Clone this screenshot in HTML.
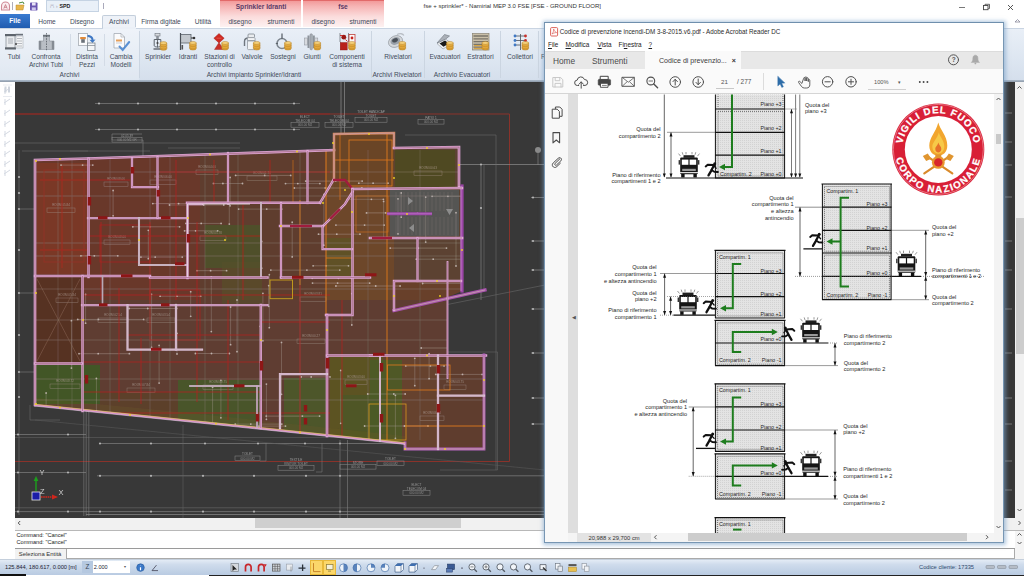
<!DOCTYPE html>
<html><head><meta charset="utf-8"><title>fse + sprinkler - Namirial MEP 3.0 FSE</title>
<style>
html,body{margin:0;padding:0;}
body{width:1024px;height:576px;overflow:hidden;position:relative;background:#fff;font-family:"Liberation Sans",sans-serif;color:#3a4450;}
.a{position:absolute;}
.t{position:absolute;white-space:nowrap;font-size:6.6px;line-height:8px;color:#414b5a;transform:translateX(-50%);text-align:center;}
.l{position:absolute;white-space:nowrap;font-size:6.6px;line-height:8px;color:#414b5a;}
.sep{position:absolute;top:31px;width:1px;height:47px;background:#cbd5e1;}
svg{position:absolute;overflow:visible;}
</style></head><body>
<!-- ===== MAIN APP TITLE BAR ===== -->
<div class="a" style="left:0;top:0;width:1024px;height:28px;background:#fff;"></div>
<!-- contextual tab groups -->
<div class="a" style="left:220px;top:0;width:81px;height:27px;background:linear-gradient(#f29a9a 0,#f6b4b4 20%,#fbdcdc 60%,#fdf1f1 100%);border-top:1px solid #e26a6a;box-sizing:border-box;"></div>
<div class="a" style="left:303px;top:0;width:81px;height:27px;background:linear-gradient(#f29a9a 0,#f6b4b4 20%,#fbdcdc 60%,#fdf1f1 100%);border-top:1px solid #e26a6a;box-sizing:border-box;"></div>
<div class="t" style="left:261px;top:3px;font-weight:bold;color:#5a3a66;">Sprinkler Idranti</div>
<div class="t" style="left:343px;top:3px;font-weight:bold;color:#5a3a66;">fse</div>
<div class="t" style="left:240px;top:18px;">disegno</div>
<div class="t" style="left:281px;top:18px;">strumenti</div>
<div class="t" style="left:323px;top:18px;">disegno</div>
<div class="t" style="left:363px;top:18px;">strumenti</div>
<!-- quick access -->
<div class="a" style="left:46px;top:0;width:53px;height:12px;background:#e9f0f8;border:1px solid #c5d3e3;box-sizing:border-box;"></div>
<div class="l" style="left:59.4px;top:2px;color:#222;font-size:5.3px;font-weight:bold;">SPD</div>
<div class="l" style="left:50px;top:2px;color:#aab;font-size:6px;">⩃ ›</div>
<svg style="left:0;top:0" width="46" height="14" viewBox="0 0 46 14">
 <path d="M1.500 10V6a4 4 0 0 1 8 0v4z" fill="#fbeef0" stroke="#cf8a96" stroke-width="1.100"/><path d="M3.800 8.600l1.700-4l1.700 4M4.500 7.300h2" fill="none" stroke="#b8606c" stroke-width=".7"/>
 <rect x="12" y="2" width=".8" height="8" fill="#99a"/>
 <path d="M16 5 h8 l-1 5 h-7 z" fill="#e8b64c" stroke="#b98a2a" stroke-width=".5"/><path d="M19 3 l4 -1 l1 2" fill="none" stroke="#4a8a3a" stroke-width="1"/>
 <rect x="30" y="2.5" width="7.5" height="8" rx=".8" fill="#6a56b0"/><rect x="32" y="2.5" width="3.6" height="3" fill="#e8e4f6"/><rect x="31.8" y="7.4" width="4" height="3" fill="#cfc8ee"/>
</svg>
<div class="a" style="left:103px;top:3px;width:1px;height:6px;background:#aab;"></div>
<!-- title -->
<div class="l" style="left:423.5px;top:2px;color:#333;font-size:6.05px;">fse + sprinkler* - Namirial MEP 3.0 FSE [FSE - GROUND FLOOR]</div>
<svg style="left:950px;top:0" width="74" height="28" viewBox="950 0 74 28">
 <path d="M959 7.5 h6" stroke="#555" stroke-width=".8"/>
 <rect x="983.5" y="5.5" width="4.5" height="4.2" fill="#fff" stroke="#444" stroke-width=".9"/><path d="M985 5.3 v-1 h4.5 v4.2 h-1.2" fill="none" stroke="#444" stroke-width=".8"/>
 <path d="M1008 5 l5 5 m0 -5 l-5 5" stroke="#444" stroke-width=".9"/>
 <path d="M1015 22 l2.5 -2.5 l2.5 2.5 z" fill="none" stroke="#889" stroke-width=".8"/>
</svg>
<!-- tabs -->
<div class="a" style="left:0;top:14px;width:30px;height:14px;background:linear-gradient(#3a7bd0,#1f5cb0);"></div>
<div class="t" style="left:15px;top:17px;color:#fff;font-weight:bold;">File</div>
<div class="t" style="left:47px;top:18px;">Home</div>
<div class="t" style="left:82px;top:18px;">Disegno</div>
<div class="a" style="left:102px;top:15px;width:34px;height:14px;background:#eef2f8;border:1px solid #c3cedb;border-bottom:none;box-sizing:border-box;border-radius:2px 2px 0 0;"></div>
<div class="t" style="left:119px;top:18px;">Archivi</div>
<div class="t" style="left:161px;top:18px;">Firma digitale</div>
<div class="t" style="left:203px;top:18px;">Utilità</div>
<!-- ribbon body -->
<div class="a" style="left:0;top:28px;width:1024px;height:52px;background:linear-gradient(#e9eff7,#dde6f1 60%,#d5dfec);border-top:1px solid #c9d4e2;box-sizing:border-box;"></div>
<div class="a" style="left:102.5px;top:27px;width:33px;height:2px;background:#ebf0f7;"></div>
<div class="a" style="left:0;top:29px;width:139px;height:51px;background:rgba(255,255,255,.25);"></div>
<div class="a" style="left:0;top:80px;width:1024px;height:2px;background:linear-gradient(#aebccd,#8d99a8);"></div>
<div class="sep" style="left:69.5px;top:34px;height:32px;background:#d3dbe6;"></div>
<div class="sep" style="left:103.5px;top:34px;height:32px;background:#d3dbe6;"></div>
<div class="sep" style="left:139px;"></div>
<div class="sep" style="left:371px;"></div>
<div class="sep" style="left:424px;"></div>
<div class="sep" style="left:500px;"></div>
<div class="sep" style="left:538px;"></div>
<!-- labels -->
<div class="t" style="left:14px;top:53px;">Tubi</div>
<div class="t" style="left:46px;top:53px;">Confronta<br>Archivi Tubi</div>
<div class="t" style="left:87px;top:53px;">Distinta<br>Pezzi</div>
<div class="t" style="left:121px;top:53px;">Cambia<br>Modelli</div>
<div class="t" style="left:69.5px;top:70.7px;">Archivi</div>
<div class="t" style="left:158px;top:53px;">Sprinkler</div>
<div class="t" style="left:188px;top:53px;">Idranti</div>
<div class="t" style="left:219.5px;top:53px;">Stazioni di<br>controllo</div>
<div class="t" style="left:252px;top:53px;">Valvole</div>
<div class="t" style="left:283px;top:53px;">Sostegni</div>
<div class="t" style="left:312px;top:53px;">Giunti</div>
<div class="t" style="left:347px;top:53px;">Componenti<br>di sistema</div>
<div class="t" style="left:254px;top:70.7px;">Archivi impianto Sprinkler/Idranti</div>
<div class="t" style="left:398px;top:53px;">Rivelatori</div>
<div class="t" style="left:397px;top:70.7px;">Archivi Rivelatori</div>
<div class="t" style="left:445px;top:53px;">Evacuatori</div>
<div class="t" style="left:480.5px;top:53px;">Estrattori</div>
<div class="t" style="left:462px;top:70.7px;">Archivio Evacuatori</div>
<div class="t" style="left:520px;top:53px;">Collettori</div>
<div class="l" style="left:541px;top:53px;">R</div>
<!-- ===== RIBBON ICONS ===== -->
<svg style="left:0;top:0" width="545" height="82" viewBox="0 0 545 82">
<g transform="translate(5 33)"><rect x="1" y="1.500" width="9" height="14" fill="#e9ecef" stroke="#8d949c" stroke-width=".8"/><rect x="0" y="1" width="11" height="2.200" fill="#5d646c"/><rect x="0" y="14.300" width="11" height="2.200" fill="#5d646c"/><rect x="3" y="5" width="5" height="6" fill="#c9cdd2"/><rect x="11" y="3" width="7" height="12" fill="#f4f5f7" stroke="#a8aeb6" stroke-width=".6"/><path d="M12 5.500h5M12 8h5M12 10.500h5M12 13h5" stroke="#8d949c" stroke-width=".6"/><rect x="10.500" y="0.800" width="7.500" height="1.600" fill="#6b727a"/><circle cx="11" cy="11" r="1" fill="#444"/></g>
<g transform="translate(38 33)"><path d="M1 8h4.500V3h6v5H16v8.500H1z" fill="#b9bec5" stroke="#8a9098" stroke-width=".6"/><rect x="1" y="8" width="2.200" height="8.500" fill="#858b93"/><rect x="13.800" y="8" width="2.200" height="8.500" fill="#858b93"/><rect x="5" y="1.800" width="7" height="1.800" fill="#6b727a"/><path d="M8.500 0v18" stroke="#4a5058" stroke-width=".7" stroke-dasharray="1.600 1"/></g>
<g transform="translate(78 33)"><rect x=".5" y=".5" width="9" height="12" fill="#fbfbfc" stroke="#9aa1aa" stroke-width=".7"/><rect x="2.200" y="4" width="5.600" height="2.200" fill="#e08a3a"/><rect x="3.200" y="6.200" width="3.600" height="3.600" fill="#6b727a"/><path d="M9.500 2c3.500 0 6 1.800 6 4.800l2-.2-3 3.400-3-3.200 2 .2C13.500 5 11.500 4 9.500 4z" fill="#3f78c4"/><rect x="9.500" y="10" width="7.500" height="7.500" fill="#f4f6f8" stroke="#7d858e" stroke-width=".8"/><path d="M9.500 12.500h7.500" stroke="#7d858e" stroke-width=".7"/></g>
<g transform="translate(113 33)"><path d="M1 .5h7l3.500 3.500V15H1z" fill="#fbfbfc" stroke="#9aa1aa" stroke-width=".7"/><path d="M8 .5V4h3.500" fill="none" stroke="#9aa1aa" stroke-width=".6"/><rect x="3" y="6.500" width="6" height="2" fill="#e6a05a"/><rect x="3" y="9.500" width="6" height="1" fill="#c9ced4"/><path d="M6.500 13.500l3.200 3.500 6.500-8" fill="none" stroke="#4a86cf" stroke-width="2" stroke-linecap="round" opacity=".9"/></g>
<g transform="translate(153 33)"><rect x="2" y=".5" width="5" height="2.500" fill="#d7dadf" stroke="#6f767e" stroke-width=".6"/><rect x="3.200" y="3" width="2.600" height="3.500" fill="#8a9098"/><path d="M1.200 6.500h6.600v6c0 2-6.600 2-6.600 0z" fill="none" stroke="#5d646c" stroke-width="1"/><path d="M4.500 6.500v8" stroke="#5d646c" stroke-width=".9"/><path d="M.5 16h8" stroke="#5d646c" stroke-width="1.400"/><circle cx="4.500" cy="10" r="1.100" fill="#444"/><path d="M7.2 10.1v5.6a3.3 1.5 0 0 0 6.6 0v-5.6z" fill="#e3a83a" stroke="#b07a1e" stroke-width=".5"/><path d="M7.2 12.3a3.3 1.5 0 0 0 6.6 0M7.2 14.5a3.3 1.5 0 0 0 6.6 0" fill="none" stroke="#b98428" stroke-width=".45"/><ellipse cx="10.5" cy="10.1" rx="3.3" ry="1.5" fill="#f4cf7a" stroke="#b07a1e" stroke-width=".45"/></g>
<g transform="translate(179 33)"><rect x="1.500" y="1.500" width="10.500" height="8.500" fill="#c3c8ce" stroke="#5d646c" stroke-width=".8"/><path d="M1.500 0v17" stroke="#4a5058" stroke-width="1.200"/><path d="M12 5h3.500" stroke="#333" stroke-width="1"/><circle cx="15" cy="5" r="1.300" fill="#333"/><rect x="2.500" y="12" width="1.600" height="4.500" fill="#555"/><path d="M10.6 9.9v5.6a3.3 1.5 0 0 0 6.6 0v-5.6z" fill="#e3a83a" stroke="#b07a1e" stroke-width=".5"/><path d="M10.6 12.100000000000001a3.3 1.5 0 0 0 6.6 0M10.6 14.3a3.3 1.5 0 0 0 6.6 0" fill="none" stroke="#b98428" stroke-width=".45"/><ellipse cx="13.899999999999999" cy="9.9" rx="3.3" ry="1.5" fill="#f4cf7a" stroke="#b07a1e" stroke-width=".45"/></g>
<g transform="translate(213 33)"><path d="M6 .5l5.200 4.700L6 9.900.8 5.200z" fill="#cf2a22" stroke="#9a1a16" stroke-width=".4"/><path d="M6 9.500l4.500 7h-9z" fill="#c8302a" stroke="#9a1a16" stroke-width=".4"/><path d="M3.500 5.200h5" stroke="#e86a60" stroke-width=".7"/><path d="M8.8 9.9v5.6a3.3 1.5 0 0 0 6.6 0v-5.6z" fill="#e3a83a" stroke="#b07a1e" stroke-width=".5"/><path d="M8.8 12.100000000000001a3.3 1.5 0 0 0 6.6 0M8.8 14.3a3.3 1.5 0 0 0 6.6 0" fill="none" stroke="#b98428" stroke-width=".45"/><ellipse cx="12.100000000000001" cy="9.9" rx="3.3" ry="1.5" fill="#f4cf7a" stroke="#b07a1e" stroke-width=".45"/></g>
<g transform="translate(243 33)"><path d="M1.500 13V8.500c0-2.500 1.500-3.500 4-3.500" fill="none" stroke="#6f767e" stroke-width="1.400"/><rect x="5" y="1" width="6.500" height="3.600" rx="1" fill="#e9ecef" stroke="#6f767e" stroke-width=".7"/><rect x="4.500" y="4.600" width="7.600" height="12" rx="1" fill="#f1f3f5" stroke="#8a9098" stroke-width=".7"/><rect x="4.500" y="7" width="7.600" height="1.400" fill="#9aa1aa"/><path d="M10.4 9.9v5.6a3.3 1.5 0 0 0 6.6 0v-5.6z" fill="#e3a83a" stroke="#b07a1e" stroke-width=".5"/><path d="M10.4 12.100000000000001a3.3 1.5 0 0 0 6.6 0M10.4 14.3a3.3 1.5 0 0 0 6.6 0" fill="none" stroke="#b98428" stroke-width=".45"/><ellipse cx="13.7" cy="9.9" rx="3.3" ry="1.5" fill="#f4cf7a" stroke="#b07a1e" stroke-width=".45"/></g>
<g transform="translate(275 33)"><circle cx="7" cy="10.500" r="5" fill="none" stroke="#7d858e" stroke-width="1.500"/><path d="M7 .5v5.500" stroke="#5d646c" stroke-width="1.300"/><path d="M.8 10.500h2.200" stroke="#5d646c" stroke-width="1.200"/><path d="M9.6 9.9v5.6a3.3 1.5 0 0 0 6.6 0v-5.6z" fill="#e3a83a" stroke="#b07a1e" stroke-width=".5"/><path d="M9.6 12.100000000000001a3.3 1.5 0 0 0 6.6 0M9.6 14.3a3.3 1.5 0 0 0 6.6 0" fill="none" stroke="#b98428" stroke-width=".45"/><ellipse cx="12.899999999999999" cy="9.9" rx="3.3" ry="1.5" fill="#f4cf7a" stroke="#b07a1e" stroke-width=".45"/></g>
<g transform="translate(304 33)"><rect x=".5" y="5" width="3" height="7" fill="#d7dadf" stroke="#8a9098" stroke-width=".5"/><rect x="3.500" y="2.500" width="2" height="12.500" fill="#8d949c"/><rect x="6" y=".8" width="2.400" height="16" rx="1" fill="#a8aeb6" stroke="#6f767e" stroke-width=".4"/><rect x="8.800" y="2.500" width="2" height="12.500" fill="#8d949c"/><rect x="10.800" y="5" width="3" height="7" fill="#d7dadf" stroke="#8a9098" stroke-width=".5"/><path d="M10 9.9v5.6a3.3 1.5 0 0 0 6.6 0v-5.6z" fill="#e3a83a" stroke="#b07a1e" stroke-width=".5"/><path d="M10 12.100000000000001a3.3 1.5 0 0 0 6.6 0M10 14.3a3.3 1.5 0 0 0 6.6 0" fill="none" stroke="#b98428" stroke-width=".45"/><ellipse cx="13.3" cy="9.9" rx="3.3" ry="1.5" fill="#f4cf7a" stroke="#b07a1e" stroke-width=".45"/></g>
<g transform="translate(339 33)"><path d="M1 0v9M9.500 0v9" stroke="#6f767e" stroke-width=".8"/><rect x="10" y="1.500" width="6" height="8" fill="#fafafa" stroke="#c0403a" stroke-width=".8"/><circle cx="13" cy="5" r="1.400" fill="#c8221c"/><circle cx="4.800" cy="4.200" r="2.400" fill="#9a1a16"/><path d="M1 2.500h3M6.500 6.500l2 2" stroke="#c8221c" stroke-width=".9"/><rect x="1.200" y="9.500" width="7" height="7.500" fill="#b8221c" stroke="#8a1612" stroke-width=".4"/><path d="M9.6 9.9v5.6a3.3 1.5 0 0 0 6.6 0v-5.6z" fill="#e3a83a" stroke="#b07a1e" stroke-width=".5"/><path d="M9.6 12.100000000000001a3.3 1.5 0 0 0 6.6 0M9.6 14.3a3.3 1.5 0 0 0 6.6 0" fill="none" stroke="#b98428" stroke-width=".45"/><ellipse cx="12.899999999999999" cy="9.9" rx="3.3" ry="1.5" fill="#f4cf7a" stroke="#b07a1e" stroke-width=".45"/></g>
<g transform="translate(388 33)"><ellipse cx="7.500" cy="8.500" rx="7.300" ry="5.600" transform="rotate(-24 7.500 8.500)" fill="#d4d7db" stroke="#8a9098" stroke-width=".6"/><ellipse cx="7.300" cy="8" rx="5" ry="3.600" transform="rotate(-24 7.300 8)" fill="#9aa1aa"/><ellipse cx="7" cy="7.300" rx="3" ry="2" transform="rotate(-24 7 7.300)" fill="#4a5058"/><path d="M9 1.500c3-1.500 6-.8 6.800 1" fill="none" stroke="#b9bec5" stroke-width="1.300"/><path d="M11 9.9v5.6a3.3 1.5 0 0 0 6.6 0v-5.6z" fill="#e3a83a" stroke="#b07a1e" stroke-width=".5"/><path d="M11 12.100000000000001a3.3 1.5 0 0 0 6.6 0M11 14.3a3.3 1.5 0 0 0 6.6 0" fill="none" stroke="#b98428" stroke-width=".45"/><ellipse cx="14.3" cy="9.9" rx="3.3" ry="1.5" fill="#f4cf7a" stroke="#b07a1e" stroke-width=".45"/></g>
<g transform="translate(436 33)"><path d="M1 10.500L9.500 6l6 4.500L7 16z" fill="#f1f3f5" stroke="#8a9098" stroke-width=".6"/><path d="M3.500 10.500L9 7.600l4 3-5.500 3.200z" fill="#1a1a1a"/><path d="M1 10L8.500 1.500l5 1.500-4 3.200z" fill="#aab0b8" stroke="#6f767e" stroke-width=".6"/><path d="M10.6 9.9v5.6a3.3 1.5 0 0 0 6.6 0v-5.6z" fill="#e3a83a" stroke="#b07a1e" stroke-width=".5"/><path d="M10.6 12.100000000000001a3.3 1.5 0 0 0 6.6 0M10.6 14.3a3.3 1.5 0 0 0 6.6 0" fill="none" stroke="#b98428" stroke-width=".45"/><ellipse cx="13.899999999999999" cy="9.9" rx="3.3" ry="1.5" fill="#f4cf7a" stroke="#b07a1e" stroke-width=".45"/></g>
<g transform="translate(472 33)"><rect x=".5" y=".5" width="16.500" height="16.500" fill="#c9bfa8" stroke="#8a8474" stroke-width=".7"/><path d="M1.500 3h14.500M1.500 5.800h14.500M1.500 8.600h14.500M1.500 11.400h14.500M1.500 14.200h14.500" stroke="#7a756a" stroke-width="1.300"/><path d="M2 12.600h8M2 15.400h8" stroke="#d9a43a" stroke-width="1"/><path d="M10 9.9v5.6a3.3 1.5 0 0 0 6.6 0v-5.6z" fill="#e3a83a" stroke="#b07a1e" stroke-width=".5"/><path d="M10 12.100000000000001a3.3 1.5 0 0 0 6.6 0M10 14.3a3.3 1.5 0 0 0 6.6 0" fill="none" stroke="#b98428" stroke-width=".45"/><ellipse cx="13.3" cy="9.9" rx="3.3" ry="1.5" fill="#f4cf7a" stroke="#b07a1e" stroke-width=".45"/></g>
<g transform="translate(512 33)"><path d="M8.500 1v16M3 3h10.500M3 7.500h10.500M3 12h5.500" stroke="#4a5058" stroke-width=".8"/><circle cx="3" cy="3" r="1.400" fill="#3f78c4"/><circle cx="3" cy="7.500" r="1.400" fill="#3f78c4"/><circle cx="3" cy="12" r="1.400" fill="#3f78c4"/><circle cx="13.500" cy="3" r="1.400" fill="#c8302a"/><circle cx="13.500" cy="7.500" r="1.400" fill="#c8302a"/><path d="M10 9.9v5.6a3.3 1.5 0 0 0 6.6 0v-5.6z" fill="#e3a83a" stroke="#b07a1e" stroke-width=".5"/><path d="M10 12.100000000000001a3.3 1.5 0 0 0 6.6 0M10 14.3a3.3 1.5 0 0 0 6.6 0" fill="none" stroke="#b98428" stroke-width=".45"/><ellipse cx="13.3" cy="9.9" rx="3.3" ry="1.5" fill="#f4cf7a" stroke="#b07a1e" stroke-width=".45"/></g>
</svg>
<!-- ===== CAD AREA FRAME ===== -->
<div class="a" style="left:0;top:82px;width:15px;height:478px;background:#fff;"></div>
<div class="a" id="cad" style="left:15px;top:82px;width:1000px;height:436px;background:#383838;"></div>
<div class="a" style="left:1015px;top:82px;width:9px;height:436px;background:#f1f1f1;"></div>
<div class="a" style="left:1016px;top:218px;width:8px;height:136px;background:#cdcdcd;"></div>
<div class="a" style="left:15px;top:518px;width:1009px;height:12px;background:#f1f1f1;"></div>
<div class="a" style="left:255px;top:518px;width:206px;height:10px;background:#cfcfcf;"></div>
<!-- command area -->
<div class="a" style="left:15px;top:530px;width:1009px;height:30px;background:#fff;border-top:1px solid #b8b8b8;box-sizing:border-box;"></div>
<div class="l" style="left:16.5px;top:531.5px;color:#222;font-size:5.6px;line-height:7.6px;">Command: "Cancel"<br>Command: "Cancel"</div>
<div class="a" style="left:15px;top:548px;width:1000px;height:1px;background:#9a9a9a;"></div>
<div class="a" style="left:15px;top:549px;width:51px;height:11px;background:#f2f2f2;"></div>
<div class="a" style="left:66px;top:549px;width:949px;height:10px;background:#fff;border:1px solid #aaa;border-top:none;box-sizing:border-box;"></div>
<div class="l" style="left:18.8px;top:550px;color:#333;font-size:5.9px;">Seleziona Entità</div>
<div class="a" style="left:1015px;top:531px;width:9px;height:29px;background:#f4f4f4;"></div>
<!-- status bar -->
<div class="a" style="left:0;top:559px;width:1024px;height:16px;background:linear-gradient(#e3ebf5 0,#cfdcec 30%,#b9cbe2 100%);border-top:1px solid #c4cfdc;box-sizing:border-box;"></div>
<div class="a" style="left:0;top:574px;width:26px;height:2px;background:#111;"></div>
<div class="a" style="left:209px;top:574.5px;width:815px;height:1.5px;background:#222;"></div>
<div class="l" style="left:5px;top:563px;color:#223;font-size:5.72px;">125.844, 180.617, 0.000 [m]</div>
<div class="a" style="left:82px;top:561px;width:11px;height:12px;background:#b5c8e0;"></div>
<div class="l" style="left:85.5px;top:563px;color:#345;font-size:6.3px;">Z</div>
<div class="a" style="left:93px;top:561px;width:37px;height:12px;background:#fff;"></div>
<div class="l" style="left:93.8px;top:563px;color:#223;font-size:5.5px;">2.000</div>
<div class="l" style="left:124px;top:563px;color:#555;font-size:4px;">▾</div>
<div class="l" style="left:919px;top:563px;color:#2d4a6e;font-size:5.72px;">Codice cliente: 17335</div>
<svg style="left:0;top:0" width="1024" height="576" viewBox="0 0 1024 576" fill="none" stroke="#555" stroke-width="1">
<path d="M1017.500 88.500l2-2l2 2M1017.500 509l2 2l2-2M1017.500 535.500l2-2l2 2M1017.500 542l2 2l2-2M20.200 521l-2 2l2 2M1018.500 521l2 2l-2 2"/>
</svg>
<!-- ===== STATUS BAR ICONS + LEFT TOOLBAR ===== -->
<div class="a" style="left:310px;top:560px;width:13px;height:14.500px;background:#fbd76a;border:1px solid #e8b93a;box-sizing:border-box;"></div>
<div class="a" style="left:323px;top:560px;width:13px;height:14.500px;background:#fbd76a;border:1px solid #e8b93a;box-sizing:border-box;"></div>
<svg style="left:0;top:0" width="1024" height="576" viewBox="0 0 1024 576">
<rect x="231" y="563.6" width="7.500" height="8" fill="#d5d9de" stroke="#7d858e" stroke-width=".7"/><path d="M232.500 565.1l4.500 4.500h-2.500l-2 1.500z" fill="#222"/>
<path d="M245.5 571.6v-4.500a2.800 2.800 0 0 1 5.600 0v4.500" fill="none" stroke="#c8262a" stroke-width="1.700"/>
<path d="M258.5 571.6v-4.500a2.800 2.800 0 0 1 5.600 0v4.500" fill="none" stroke="#c8262a" stroke-width="1.700"/>
<path d="M264 564.1l2.800 .4l-1.600 2.200z" fill="#c8262a"/>
<rect x="272.500" y="564.1" width="7.500" height="7" fill="#cfd3d8" stroke="#555" stroke-width=".7"/><path d="M272.500 566.4h7.500M272.500 568.8000000000001h7.500M275 564.1v7M277.500 564.1v7" stroke="#555" stroke-width=".55"/>
<rect x="286.500" y="564.1" width="6" height="6" fill="#e8ebef" stroke="#9aa1aa" stroke-width=".6"/><path d="M291 566.6v5" stroke="#8a9098" stroke-width=".8"/>
<path d="M298.500 568.1h7M302.600 564.6v6.500" stroke="#2a3038" stroke-width="1.300"/>
<path d="M313.500 563.1v8.500h7" fill="none" stroke="#c8862a" stroke-width="1"/>
<rect x="326.500" y="564.6" width="6.500" height="5" fill="#f4f0d8" stroke="#8a7a3a" stroke-width=".7"/><path d="M328 571.1h3" stroke="#8a7a3a" stroke-width=".8"/>
<circle cx="343.5" cy="567.8000000000001" r="4" fill="#eef3f9" stroke="#5a82b4" stroke-width=".8"/>
<path d="M343.5 563.8000000000001a4 4 0 0 1 0 8z" fill="#3f6fb0" opacity=".85"/>
<circle cx="357" cy="567.8000000000001" r="4" fill="#eef3f9" stroke="#5a82b4" stroke-width=".8"/>
<path d="M357 563.8000000000001a4 4 0 0 0 0 8z" fill="#3f6fb0" opacity=".85"/>
<circle cx="371" cy="567.8000000000001" r="4" fill="#eef3f9" stroke="#5a82b4" stroke-width=".8"/>
<path d="M371 563.8000000000001a4 4 0 0 1 4 4h-4z" fill="#3f6fb0" opacity=".85"/>
<circle cx="385" cy="567.8000000000001" r="4" fill="#eef3f9" stroke="#5a82b4" stroke-width=".8"/>
<path d="M385 563.8000000000001a4 4 0 0 0 -4 4h4z" fill="#3f6fb0" opacity=".85"/>
<path d="M395 566.1l2.500-2.500h6v6l-2.500 2.500h-6z" fill="#f2f5f9" stroke="#44618a" stroke-width=".7"/><path d="M395 566.1l2.500-2.500h6l-2.500 2.500z" fill="#3f6fb0"/><path d="M401 566.1v6" stroke="#44618a" stroke-width=".6"/>
<path d="M409 566.1l2.500-2.500h6v6l-2.500 2.500h-6z" fill="#f2f5f9" stroke="#44618a" stroke-width=".7"/><path d="M409 566.1l2.500-2.500h6l-2.500 2.500z" fill="#3f6fb0"/><path d="M415 566.1v6" stroke="#44618a" stroke-width=".6"/>
<circle cx="424" cy="568.1" r=".7" fill="#556"/>
<path d="M431.500 569.6l3-4h4l-3 4z" fill="#f4f6f9" stroke="#8a9098" stroke-width=".7"/>
<rect x="447.500" y="564.1" width="7" height="5.500" fill="#3a5a94" stroke="#263c66" stroke-width=".6"/><rect x="446.500" y="568.6" width="6" height="3.500" fill="#5a7ab4" stroke="#263c66" stroke-width=".5"/>
<path d="M461 568.1h2" stroke="#445" stroke-width=".8"/>
<circle cx="472" cy="566.9" r="3.100" fill="#f2f5f9" stroke="#555c66" stroke-width=".9"/><path d="M474.3 569.2l2.600 2.600" stroke="#555c66" stroke-width="1.300"/>
<circle cx="486" cy="566.9" r="3.100" fill="#f2f5f9" stroke="#555c66" stroke-width=".9"/><path d="M488.3 569.2l2.600 2.600" stroke="#555c66" stroke-width="1.300"/>
<circle cx="500" cy="566.9" r="3.100" fill="#f2f5f9" stroke="#555c66" stroke-width=".9"/><path d="M502.3 569.2l2.600 2.600" stroke="#555c66" stroke-width="1.300"/>
<circle cx="513.5" cy="566.9" r="3.100" fill="#f2f5f9" stroke="#555c66" stroke-width=".9"/><path d="M515.8 569.2l2.600 2.600" stroke="#555c66" stroke-width="1.300"/>
<circle cx="527.5" cy="566.9" r="3.100" fill="#f2f5f9" stroke="#555c66" stroke-width=".9"/><path d="M529.8 569.2l2.600 2.600" stroke="#555c66" stroke-width="1.300"/>
<path d="M470.500 566.9h3" stroke="#555" stroke-width=".7"/><path d="M484.500 566.9h3M486 565.4v3" stroke="#555" stroke-width=".7"/>
<path d="M540 564.6h6v5h-6z" fill="#f2f5f9" stroke="#555c66" stroke-width=".8"/><path d="M543 567.6l3.500 3.500" stroke="#333" stroke-width="1.400"/>
<rect x="555.500" y="563.6" width="4.500" height="5.500" fill="#f4f6f9" stroke="#6a727c" stroke-width=".6"/><rect x="558" y="566.1" width="4.500" height="5.500" fill="#e4e8ee" stroke="#6a727c" stroke-width=".6"/>
<rect x="568.500" y="564.1" width="8" height="2" fill="#555"/><rect x="568.500" y="567.1" width="8" height="4.500" fill="#e8c050" stroke="#a8842a" stroke-width=".5"/>
<rect x="582" y="563.6" width="4.500" height="5.500" fill="#f4f6f9" stroke="#8a9098" stroke-width=".6"/><rect x="584.500" y="566.1" width="4.500" height="5.500" fill="#eef1f5" stroke="#8a9098" stroke-width=".6"/>
<circle cx="140.500" cy="567.6" r="3.800" fill="#3a78c8" stroke="#2a5a9a" stroke-width=".6"/><path d="M140.500 565.6v.2M140.500 567.2v3" stroke="#fff" stroke-width="1.200"/>
<path d="M156.500 565.1l-4.500 5.500h6" fill="none" stroke="#445" stroke-width=".8"/>
<rect x="986" y="565.500" width="8.500" height="3" rx=".8" fill="#b5bcc6" stroke="#7d858e" stroke-width=".5"/>
<rect x="997.5" y="565.500" width="8.500" height="3" rx=".8" fill="#b5bcc6" stroke="#7d858e" stroke-width=".5"/>
<rect x="1009" y="565.500" width="8.500" height="3" rx=".8" fill="#b5bcc6" stroke="#7d858e" stroke-width=".5"/>
<path d="M4 92l6 -4M5 88v6" stroke="#d4d9e2" stroke-width="1" fill="none"/>
<path d="M4 103l6 -4M5 99v6" stroke="#d4d9e2" stroke-width="1" fill="none"/>
<path d="M4 114l6 -4M5 110v6" stroke="#d4d9e2" stroke-width="1" fill="none"/>
<path d="M4 125l6 -4M5 121v6" stroke="#d4d9e2" stroke-width="1" fill="none"/>
<path d="M4 135l6 -4M5 131v6" stroke="#d4d9e2" stroke-width="1" fill="none"/>
<path d="M4 145l6 -4M5 141v6" stroke="#d4d9e2" stroke-width="1" fill="none"/>
<path d="M4 155l6 -4M5 151v6" stroke="#d4d9e2" stroke-width="1" fill="none"/>
<path d="M4 165l6 -4M5 161v6" stroke="#d4d9e2" stroke-width="1" fill="none"/>
<path d="M4 174l6 -4M5 170v6" stroke="#d4d9e2" stroke-width="1" fill="none"/>
<path d="M3 85h9M3 96.500h9" stroke="#e2e6ec" stroke-width=".8"/>
<rect x="4.500" y="86.500" width="2" height="6" fill="#cfd5de"/><rect x="8" y="86.500" width="2" height="6" fill="#cfd5de"/>
</svg>
<!-- ===== CAD DRAWING ===== -->
<svg style="left:0;top:0" width="1024" height="576" viewBox="0 0 1024 576" font-family="Liberation Sans, sans-serif">
<defs><filter id="soft" x="0" y="0" width="100%" height="100%" filterUnits="userSpaceOnUse"><feGaussianBlur stdDeviation=".45"/></filter><clipPath id="cadclip"><rect x="15" y="82" width="1000" height="436"/></clipPath>
<clipPath id="bclip"><path d="M35 160L88 158.5L190 155L334 150L334 134L394 133L394 148L459 147L459 186L462 186L462 291L447.5 297L447.5 355L485 355L485 449L405 449L405 443.4L382 441L190 421L34 405Z"/></clipPath></defs>
<g clip-path="url(#cadclip)"><g filter="url(#soft)">
<path d="M15 114L330 114" stroke="#742f2a" stroke-width="1.9" fill="none" />
<path d="M330 114L509.5 114L509.5 461.5L15 461.5" stroke="#8a312c" stroke-width="1" fill="none" />
<path d="M1005 113L1012 113" stroke="#9a9a9a" stroke-width="0.6" fill="none" />
<path d="M1005 142L1012 142" stroke="#9a9a9a" stroke-width="0.6" fill="none" />
<path d="M1005 165L1012 165" stroke="#9a9a9a" stroke-width="0.6" fill="none" />
<path d="M1005 197L1012 197" stroke="#9a9a9a" stroke-width="0.6" fill="none" />
<path d="M1005 241L1012 241" stroke="#9a9a9a" stroke-width="0.6" fill="none" />
<path d="M1005 270L1012 270" stroke="#9a9a9a" stroke-width="0.6" fill="none" />
<path d="M1005 309L1012 309" stroke="#9a9a9a" stroke-width="0.6" fill="none" />
<path d="M1005 353L1012 353" stroke="#9a9a9a" stroke-width="0.6" fill="none" />
<path d="M1005 398L1012 398" stroke="#9a9a9a" stroke-width="0.6" fill="none" />
<path d="M1005 424L1012 424" stroke="#9a9a9a" stroke-width="0.6" fill="none" />
<path d="M1005 461L1012 461" stroke="#9a9a9a" stroke-width="0.6" fill="none" />
<path d="M1005 490L1012 490" stroke="#9a9a9a" stroke-width="0.6" fill="none" />
<path d="M95 103.5L300 103.5" stroke="#8d8d8d" stroke-width="0.6" fill="none" />
<circle cx="99" cy="103.5" r="1.1" fill="#b5b5b5"/>
<circle cx="138" cy="103.5" r="1.1" fill="#b5b5b5"/>
<circle cx="177" cy="103.5" r="1.1" fill="#b5b5b5"/>
<circle cx="216" cy="103.5" r="1.1" fill="#b5b5b5"/>
<circle cx="255" cy="103.5" r="1.1" fill="#b5b5b5"/>
<circle cx="294" cy="103.5" r="1.1" fill="#b5b5b5"/>
<path d="M95 129.5L300 129.5" stroke="#8d8d8d" stroke-width="0.6" fill="none" />
<circle cx="99" cy="129.5" r="1.1" fill="#b5b5b5"/>
<circle cx="138" cy="129.5" r="1.1" fill="#b5b5b5"/>
<circle cx="177" cy="129.5" r="1.1" fill="#b5b5b5"/>
<circle cx="216" cy="129.5" r="1.1" fill="#b5b5b5"/>
<circle cx="255" cy="129.5" r="1.1" fill="#b5b5b5"/>
<circle cx="294" cy="129.5" r="1.1" fill="#b5b5b5"/>
<path d="M15 143L240 143" stroke="#686868" stroke-width="0.6" fill="none" />
<path d="M22 151L88 151" stroke="#686868" stroke-width="0.6" fill="none" />
<path d="M70 151L150 151" stroke="#666" stroke-width="0.6" fill="none" />
<path d="M168 148L240 148" stroke="#666" stroke-width="0.6" fill="none" />
<path d="M112 134L112 140L143 140L143 158" stroke="#8d8d8d" stroke-width="0.5" fill="none" />
<path d="M112 134L142 134" stroke="#8d8d8d" stroke-width="0.5" fill="none" />
<path d="M400 164.5L545 164.5" stroke="#8d8d8d" stroke-width="0.7" fill="none" />
<circle cx="481" cy="164.5" r="1.1" fill="#b5b5b5"/>
<circle cx="538" cy="150" r="3" fill="#8a8a8a"/>
<path d="M538 153L538 165" stroke="#8d8d8d" stroke-width="0.6" fill="none" />
<path d="M481 165L481 300" stroke="#8d8d8d" stroke-width="0.6" fill="none" />
<circle cx="481" cy="208" r="1.1" fill="#b5b5b5"/>
<path d="M484 165L484 292" stroke="#777" stroke-width="0.5" fill="none" />
<path d="M496 135L496 470" stroke="#6f6f6f" stroke-width="0.5" fill="none" />
<path d="M405 135L496 135" stroke="#6f6f6f" stroke-width="0.5" fill="none" />
<path d="M440 352L497.5 352L497.5 470L440 470" stroke="#6a6a6a" stroke-width="0.5" fill="none" />
<path d="M531 197.5L545 197.5" stroke="#999" stroke-width="0.6" fill="none" />
<circle cx="533" cy="197.5" r="1.1" fill="#b5b5b5"/>
<path d="M531 241L545 241" stroke="#999" stroke-width="0.6" fill="none" />
<circle cx="533" cy="241" r="1.1" fill="#b5b5b5"/>
<path d="M531 270L545 270" stroke="#999" stroke-width="0.6" fill="none" />
<circle cx="533" cy="270" r="1.1" fill="#b5b5b5"/>
<path d="M531 309L545 309" stroke="#999" stroke-width="0.6" fill="none" />
<circle cx="533" cy="309" r="1.1" fill="#b5b5b5"/>
<path d="M531 353L545 353" stroke="#999" stroke-width="0.6" fill="none" />
<circle cx="533" cy="353" r="1.1" fill="#b5b5b5"/>
<path d="M531 398L545 398" stroke="#999" stroke-width="0.6" fill="none" />
<circle cx="533" cy="398" r="1.1" fill="#b5b5b5"/>
<path d="M531 424L545 424" stroke="#999" stroke-width="0.6" fill="none" />
<circle cx="533" cy="424" r="1.1" fill="#b5b5b5"/>
<path d="M370 320L545 285" stroke="#707070" stroke-width="0.5" fill="none" />
<path d="M19 150L19 515" stroke="#7d7d7d" stroke-width="0.5" fill="none" />
<circle cx="19" cy="177" r="1.1" fill="#b5b5b5"/>
<circle cx="19" cy="193" r="1.1" fill="#b5b5b5"/>
<circle cx="19" cy="209" r="1.1" fill="#b5b5b5"/>
<circle cx="19" cy="250" r="1.1" fill="#b5b5b5"/>
<circle cx="19" cy="293" r="1.1" fill="#b5b5b5"/>
<circle cx="19" cy="335" r="1.1" fill="#b5b5b5"/>
<circle cx="19" cy="372" r="1.1" fill="#b5b5b5"/>
<circle cx="19" cy="397" r="1.1" fill="#b5b5b5"/>
<path d="M19 209L35 209" stroke="#8a8a8a" stroke-width="0.5" fill="none" />
<path d="M19 293L35 293" stroke="#8a8a8a" stroke-width="0.5" fill="none" />
<path d="M19 372L35 372" stroke="#8a8a8a" stroke-width="0.5" fill="none" />
<path d="M15 434.5L86 434.5" stroke="#8d8d8d" stroke-width="0.6" fill="none" />
<circle cx="18" cy="434.5" r="1.1" fill="#b5b5b5"/>
<circle cx="68" cy="434.5" r="1.1" fill="#b5b5b5"/>
<path d="M100 443.5L400 443.5" stroke="#8d8d8d" stroke-width="0.6" fill="none" />
<circle cx="100" cy="443.5" r="1.1" fill="#b5b5b5"/>
<circle cx="151" cy="443.5" r="1.1" fill="#b5b5b5"/>
<circle cx="205" cy="443.5" r="1.1" fill="#b5b5b5"/>
<circle cx="258" cy="443.5" r="1.1" fill="#b5b5b5"/>
<circle cx="305" cy="443.5" r="1.1" fill="#b5b5b5"/>
<circle cx="340" cy="443.5" r="1.1" fill="#b5b5b5"/>
<path d="M15 437.5L400 437.5" stroke="#666" stroke-width="0.5" fill="none" />
<path d="M15 472.5L86 472.5" stroke="#8d8d8d" stroke-width="0.6" fill="none" />
<circle cx="18" cy="472.5" r="1.1" fill="#b5b5b5"/>
<circle cx="68" cy="472.5" r="1.1" fill="#b5b5b5"/>
<path d="M97 475.8L545 475.8" stroke="#8d8d8d" stroke-width="0.6" fill="none" />
<circle cx="100" cy="475.8" r="1.1" fill="#b5b5b5"/>
<circle cx="151" cy="475.8" r="1.1" fill="#b5b5b5"/>
<circle cx="203" cy="475.8" r="1.1" fill="#b5b5b5"/>
<circle cx="254" cy="475.8" r="1.1" fill="#b5b5b5"/>
<circle cx="306" cy="475.8" r="1.1" fill="#b5b5b5"/>
<circle cx="340" cy="475.8" r="1.1" fill="#b5b5b5"/>
<path d="M15 507.8L545 507.8" stroke="#777" stroke-width="0.5" fill="none" />
<path d="M15 511.6L545 511.6" stroke="#8d8d8d" stroke-width="0.6" fill="none" />
<circle cx="18" cy="511.6" r="1.1" fill="#b5b5b5"/>
<circle cx="68" cy="511.6" r="1.1" fill="#b5b5b5"/>
<circle cx="100" cy="511.6" r="1.1" fill="#b5b5b5"/>
<circle cx="151" cy="511.6" r="1.1" fill="#b5b5b5"/>
<circle cx="203" cy="511.6" r="1.1" fill="#b5b5b5"/>
<circle cx="254" cy="511.6" r="1.1" fill="#b5b5b5"/>
<circle cx="306" cy="511.6" r="1.1" fill="#b5b5b5"/>
<circle cx="340" cy="511.6" r="1.1" fill="#b5b5b5"/>
<path d="M86 514.5L545 514.5" stroke="#9a9a9a" stroke-width="0.6" fill="none" />
<path d="M83.8 405L83.8 516" stroke="#8a8a8a" stroke-width="0.5" fill="none" />
<path d="M86.2 405L86.2 516" stroke="#8a8a8a" stroke-width="0.5" fill="none" />
<path d="M88.8 405L88.8 516" stroke="#8a8a8a" stroke-width="0.5" fill="none" />
<path d="M340 440L340 518" stroke="#8a8a8a" stroke-width="0.5" fill="none" />
<path d="M347.5 440L347.5 518" stroke="#8a8a8a" stroke-width="0.5" fill="none" />
<path d="M183 425L183 518" stroke="#666" stroke-width="0.5" fill="none" />
<path d="M30 405L30 420L60 420" stroke="#707070" stroke-width="0.5" fill="none" />
<path d="M35 420L545 470" stroke="#5c5c5c" stroke-width="0.5" fill="none" />
<path d="M341 82L341 134" stroke="#9a9a9a" stroke-width="0.6" fill="none" />
<path d="M344.5 82L344.5 134" stroke="#9a9a9a" stroke-width="0.6" fill="none" />
<text x="127.0" y="136.5" font-size="3.1" fill="#9a9a9a" text-anchor="middle">02.05.39</text>
<rect x="112" y="137.5" width="30" height="4.6" fill="none" stroke="#8a8a8a" stroke-width=".5"/>
<text x="127.0" y="141.0" font-size="3" fill="#8f8f8f" text-anchor="middle">000.00 M2.GR</text>
<text x="339.0" y="118" font-size="3.1" fill="#9a9a9a" text-anchor="middle">TOILET</text>
<text x="339.0" y="121.6" font-size="3.1" fill="#9a9a9a" text-anchor="middle">TELECOM 04</text>
<rect x="325" y="122.6" width="28" height="4.6" fill="none" stroke="#8a8a8a" stroke-width=".5"/>
<text x="339.0" y="126.1" font-size="3" fill="#8f8f8f" text-anchor="middle">000.00 M2</text>
<text x="305.0" y="118" font-size="3.1" fill="#9a9a9a" text-anchor="middle">ELECT</text>
<text x="305.0" y="121.6" font-size="3.1" fill="#9a9a9a" text-anchor="middle">TELECOM 04</text>
<rect x="291" y="122.6" width="28" height="4.6" fill="none" stroke="#8a8a8a" stroke-width=".5"/>
<text x="305.0" y="126.1" font-size="3" fill="#8f8f8f" text-anchor="middle">000.00 M2</text>
<text x="371.0" y="113" font-size="3.1" fill="#9a9a9a" text-anchor="middle">TOILET HANDICAP</text>
<text x="371.0" y="116.6" font-size="3.1" fill="#9a9a9a" text-anchor="middle">TOILET</text>
<rect x="355" y="117.6" width="32" height="4.6" fill="none" stroke="#8a8a8a" stroke-width=".5"/>
<text x="371.0" y="121.1" font-size="3" fill="#8f8f8f" text-anchor="middle">000.00 M2</text>
<text x="431.0" y="118.5" font-size="3.1" fill="#9a9a9a" text-anchor="middle">PATIO 1</text>
<rect x="418" y="119.5" width="26" height="4.6" fill="none" stroke="#8a8a8a" stroke-width=".5"/>
<text x="431.0" y="123.0" font-size="3" fill="#8f8f8f" text-anchor="middle">000.00 M2</text>
<text x="247.5" y="455" font-size="3.1" fill="#9a9a9a" text-anchor="middle">TOILET</text>
<rect x="235" y="456.0" width="25" height="4.6" fill="none" stroke="#8a8a8a" stroke-width=".5"/>
<text x="247.5" y="459.5" font-size="3" fill="#8f8f8f" text-anchor="middle">000.00 M2</text>
<text x="296.0" y="461" font-size="3.1" fill="#9a9a9a" text-anchor="middle">TEXTILE</text>
<text x="296.0" y="464.6" font-size="3.1" fill="#9a9a9a" text-anchor="middle">VISITOR TOILET</text>
<rect x="278" y="465.6" width="36" height="4.6" fill="none" stroke="#8a8a8a" stroke-width=".5"/>
<text x="296.0" y="469.1" font-size="3" fill="#8f8f8f" text-anchor="middle">000.00 M2</text>
<text x="358.0" y="463.5" font-size="3.1" fill="#9a9a9a" text-anchor="middle">STORE</text>
<rect x="340" y="464.5" width="36" height="4.6" fill="none" stroke="#8a8a8a" stroke-width=".5"/>
<text x="358.0" y="468.0" font-size="3" fill="#8f8f8f" text-anchor="middle">000.00 M2</text>
<text x="390.5" y="460" font-size="3.1" fill="#9a9a9a" text-anchor="middle">TOILET</text>
<rect x="377" y="461.0" width="27" height="4.6" fill="none" stroke="#8a8a8a" stroke-width=".5"/>
<text x="390.5" y="464.5" font-size="3" fill="#8f8f8f" text-anchor="middle">000.00 M2</text>
<text x="416.5" y="486" font-size="3.1" fill="#9a9a9a" text-anchor="middle">ELECT</text>
<text x="416.5" y="489.6" font-size="3.1" fill="#9a9a9a" text-anchor="middle">TELECOM 04</text>
<rect x="403" y="490.6" width="27" height="4.6" fill="none" stroke="#8a8a8a" stroke-width=".5"/>
<text x="416.5" y="494.1" font-size="3" fill="#8f8f8f" text-anchor="middle">000.00 M2</text>
<path d="M260 461L266 461L266 443" stroke="#808080" stroke-width="0.5" fill="none" />
<path d="M316 472L322 472L322 443" stroke="#808080" stroke-width="0.5" fill="none" />
<g clip-path="url(#bclip)">
<rect x="30" y="130" width="460" height="325" fill="#5e3d32" opacity="1"/>
<rect x="35" y="158" width="165" height="142" fill="#6e352a" opacity="0.7"/>
<rect x="37" y="163" width="50" height="111" fill="#7e3a28" opacity="0.85"/>
<rect x="35" y="277" width="47" height="86" fill="#56301f" opacity="0.9"/>
<rect x="200" y="150" width="130" height="150" fill="#60402c" opacity="0.55"/>
<rect x="326" y="132" width="68" height="168" fill="#73492a" opacity="0.75"/>
<rect x="334" y="134" width="60" height="56" fill="#6a4425" opacity="0.6"/>
<rect x="394" y="147" width="68" height="153" fill="#5a4630" opacity="0.7"/>
<rect x="395" y="150" width="60" height="37" fill="#504a20" opacity="0.95"/>
<rect x="390" y="190" width="69" height="46" fill="#555554" opacity="0.95"/>
<rect x="394" y="281" width="76" height="19" fill="#6a4028" opacity="0.8"/>
<rect x="327" y="355" width="158" height="95" fill="#67432f" opacity="0.85"/>
<rect x="438" y="357" width="46" height="91" fill="#5e3c30" opacity="0.8"/>
<rect x="36" y="365" width="64" height="39" fill="#3f5a24" opacity="0.9"/>
<rect x="100" y="392" width="80" height="30" fill="#5a4226" opacity="0.5"/>
<rect x="178" y="380" width="84" height="50" fill="#47592a" opacity="0.85"/>
<rect x="205" y="225" width="55" height="43" fill="#4c5428" opacity="0.8"/>
<rect x="222" y="262" width="40" height="42" fill="#55502a" opacity="0.55"/>
<rect x="284" y="378" width="42" height="62" fill="#4a5a2a" opacity="0.85"/>
<rect x="330" y="357" width="53" height="88" fill="#5a5424" opacity="0.9"/>
<rect x="370" y="360" width="32" height="82" fill="#4b5c26" opacity="0.85"/>
<rect x="326" y="238" width="26" height="38" fill="#5c5424" opacity="0.8"/>
<rect x="340" y="395" width="42" height="46" fill="#4c5a26" opacity="0.7"/>
<path d="M36 398L34 405L190 421L382 441L405 443.400V436L190 413Z" fill="#6a5a22" opacity=".25"/>
<path d="M36 172L484 172" stroke="#8a7f7a" stroke-width="0.45" fill="none" />
<path d="M36 196L484 196" stroke="#8a7f7a" stroke-width="0.45" fill="none" />
<path d="M36 243L484 243" stroke="#8a7f7a" stroke-width="0.45" fill="none" />
<path d="M36 256L484 256" stroke="#8a7f7a" stroke-width="0.45" fill="none" />
<path d="M36 289L484 289" stroke="#8a7f7a" stroke-width="0.45" fill="none" />
<path d="M36 320L484 320" stroke="#8a7f7a" stroke-width="0.45" fill="none" />
<path d="M36 340L484 340" stroke="#8a7f7a" stroke-width="0.45" fill="none" />
<path d="M36 379L484 379" stroke="#8a7f7a" stroke-width="0.45" fill="none" />
<path d="M36 400L484 400" stroke="#8a7f7a" stroke-width="0.45" fill="none" />
<path d="M58 150L58 440" stroke="#7f746f" stroke-width="0.4" fill="none" />
<path d="M72 150L72 440" stroke="#7f746f" stroke-width="0.4" fill="none" />
<path d="M110 150L110 440" stroke="#7f746f" stroke-width="0.4" fill="none" />
<path d="M150 150L150 440" stroke="#7f746f" stroke-width="0.4" fill="none" />
<path d="M170 150L170 440" stroke="#7f746f" stroke-width="0.4" fill="none" />
<path d="M205 150L205 440" stroke="#7f746f" stroke-width="0.4" fill="none" />
<path d="M238 150L238 440" stroke="#7f746f" stroke-width="0.4" fill="none" />
<path d="M300 150L300 440" stroke="#7f746f" stroke-width="0.4" fill="none" />
<path d="M368 150L368 440" stroke="#7f746f" stroke-width="0.4" fill="none" />
<path d="M420 150L420 440" stroke="#7f746f" stroke-width="0.4" fill="none" />
<path d="M169.5 205.0L223.8 205.0" stroke="#b3a49e" stroke-width="0.5" fill="none" opacity=".75"/>
<circle cx="169.5" cy="205.0" r=".9" fill="#cfc4c0" opacity=".8"/>
<circle cx="223.8" cy="205.0" r=".9" fill="#cfc4c0" opacity=".8"/>
<circle cx="203.7" cy="205.0" r=".9" fill="#cfc4c0" opacity=".8"/>
<path d="M77.7 319.4L143.6 319.4" stroke="#b3a49e" stroke-width="0.5" fill="none" opacity=".75"/>
<circle cx="77.7" cy="319.4" r=".9" fill="#cfc4c0" opacity=".8"/>
<circle cx="143.6" cy="319.4" r=".9" fill="#cfc4c0" opacity=".8"/>
<circle cx="98.4" cy="319.4" r=".9" fill="#cfc4c0" opacity=".8"/>
<path d="M213.5 183.5L242.5 183.5" stroke="#a8a09c" stroke-width="0.5" fill="none" opacity=".75"/>
<circle cx="213.5" cy="183.5" r=".9" fill="#cfc4c0" opacity=".8"/>
<circle cx="242.5" cy="183.5" r=".9" fill="#cfc4c0" opacity=".8"/>
<circle cx="222.9" cy="183.5" r=".9" fill="#cfc4c0" opacity=".8"/>
<path d="M266.2 416.1L319.6 416.1" stroke="#c0b0aa" stroke-width="0.5" fill="none" opacity=".75"/>
<circle cx="266.2" cy="416.1" r=".9" fill="#cfc4c0" opacity=".8"/>
<circle cx="319.6" cy="416.1" r=".9" fill="#cfc4c0" opacity=".8"/>
<circle cx="302.4" cy="416.1" r=".9" fill="#cfc4c0" opacity=".8"/>
<path d="M270.8 270.1L339.8 270.1" stroke="#b3a49e" stroke-width="0.5" fill="none" opacity=".75"/>
<circle cx="270.8" cy="270.1" r=".9" fill="#cfc4c0" opacity=".8"/>
<circle cx="339.8" cy="270.1" r=".9" fill="#cfc4c0" opacity=".8"/>
<circle cx="306.9" cy="270.1" r=".9" fill="#cfc4c0" opacity=".8"/>
<path d="M93.3 276.1L142.6 276.1" stroke="#c0b0aa" stroke-width="0.5" fill="none" opacity=".75"/>
<circle cx="93.3" cy="276.1" r=".9" fill="#cfc4c0" opacity=".8"/>
<circle cx="142.6" cy="276.1" r=".9" fill="#cfc4c0" opacity=".8"/>
<circle cx="114.2" cy="276.1" r=".9" fill="#cfc4c0" opacity=".8"/>
<path d="M366.5 212.9L417.6 212.9" stroke="#c0b0aa" stroke-width="0.5" fill="none" opacity=".75"/>
<circle cx="366.5" cy="212.9" r=".9" fill="#cfc4c0" opacity=".8"/>
<circle cx="417.6" cy="212.9" r=".9" fill="#cfc4c0" opacity=".8"/>
<circle cx="385.6" cy="212.9" r=".9" fill="#cfc4c0" opacity=".8"/>
<path d="M79.0 353.7L129.4 353.7" stroke="#c0b0aa" stroke-width="0.5" fill="none" opacity=".75"/>
<circle cx="79.0" cy="353.7" r=".9" fill="#cfc4c0" opacity=".8"/>
<circle cx="129.4" cy="353.7" r=".9" fill="#cfc4c0" opacity=".8"/>
<circle cx="98.2" cy="353.7" r=".9" fill="#cfc4c0" opacity=".8"/>
<path d="M312.2 278.3L351.3 278.3" stroke="#c0b0aa" stroke-width="0.5" fill="none" opacity=".75"/>
<circle cx="312.2" cy="278.3" r=".9" fill="#cfc4c0" opacity=".8"/>
<circle cx="351.3" cy="278.3" r=".9" fill="#cfc4c0" opacity=".8"/>
<circle cx="338.4" cy="278.3" r=".9" fill="#cfc4c0" opacity=".8"/>
<path d="M184.6 230.8L217.7 230.8" stroke="#b3a49e" stroke-width="0.5" fill="none" opacity=".75"/>
<circle cx="184.6" cy="230.8" r=".9" fill="#cfc4c0" opacity=".8"/>
<circle cx="217.7" cy="230.8" r=".9" fill="#cfc4c0" opacity=".8"/>
<circle cx="195.6" cy="230.8" r=".9" fill="#cfc4c0" opacity=".8"/>
<path d="M160.1 296.2L200.6 296.2" stroke="#a8a09c" stroke-width="0.5" fill="none" opacity=".75"/>
<circle cx="160.1" cy="296.2" r=".9" fill="#cfc4c0" opacity=".8"/>
<circle cx="200.6" cy="296.2" r=".9" fill="#cfc4c0" opacity=".8"/>
<circle cx="176.9" cy="296.2" r=".9" fill="#cfc4c0" opacity=".8"/>
<path d="M432.1 196.3L475.9 196.3" stroke="#a8a09c" stroke-width="0.5" fill="none" opacity=".75"/>
<circle cx="432.1" cy="196.3" r=".9" fill="#cfc4c0" opacity=".8"/>
<circle cx="475.9" cy="196.3" r=".9" fill="#cfc4c0" opacity=".8"/>
<circle cx="447.9" cy="196.3" r=".9" fill="#cfc4c0" opacity=".8"/>
<path d="M235.6 175.4L290.7 175.4" stroke="#c0b0aa" stroke-width="0.5" fill="none" opacity=".75"/>
<circle cx="235.6" cy="175.4" r=".9" fill="#cfc4c0" opacity=".8"/>
<circle cx="290.7" cy="175.4" r=".9" fill="#cfc4c0" opacity=".8"/>
<circle cx="264.7" cy="175.4" r=".9" fill="#cfc4c0" opacity=".8"/>
<path d="M390.2 248.1L446.5 248.1" stroke="#c0b0aa" stroke-width="0.5" fill="none" opacity=".75"/>
<circle cx="390.2" cy="248.1" r=".9" fill="#cfc4c0" opacity=".8"/>
<circle cx="446.5" cy="248.1" r=".9" fill="#cfc4c0" opacity=".8"/>
<circle cx="418.3" cy="248.1" r=".9" fill="#cfc4c0" opacity=".8"/>
<path d="M358.8 183.2L388.0 183.2" stroke="#a8a09c" stroke-width="0.5" fill="none" opacity=".75"/>
<circle cx="358.8" cy="183.2" r=".9" fill="#cfc4c0" opacity=".8"/>
<circle cx="388.0" cy="183.2" r=".9" fill="#cfc4c0" opacity=".8"/>
<circle cx="373.1" cy="183.2" r=".9" fill="#cfc4c0" opacity=".8"/>
<path d="M305.7 181.1L362.2 181.1" stroke="#c0b0aa" stroke-width="0.5" fill="none" opacity=".75"/>
<circle cx="305.7" cy="181.1" r=".9" fill="#cfc4c0" opacity=".8"/>
<circle cx="362.2" cy="181.1" r=".9" fill="#cfc4c0" opacity=".8"/>
<circle cx="335.7" cy="181.1" r=".9" fill="#cfc4c0" opacity=".8"/>
<path d="M312.5 283.1L369.7 283.1" stroke="#c0b0aa" stroke-width="0.5" fill="none" opacity=".75"/>
<circle cx="312.5" cy="283.1" r=".9" fill="#cfc4c0" opacity=".8"/>
<circle cx="369.7" cy="283.1" r=".9" fill="#cfc4c0" opacity=".8"/>
<circle cx="337.6" cy="283.1" r=".9" fill="#cfc4c0" opacity=".8"/>
<path d="M416.3 259.2L468.8 259.2" stroke="#a8a09c" stroke-width="0.5" fill="none" opacity=".75"/>
<circle cx="416.3" cy="259.2" r=".9" fill="#cfc4c0" opacity=".8"/>
<circle cx="468.8" cy="259.2" r=".9" fill="#cfc4c0" opacity=".8"/>
<circle cx="433.2" cy="259.2" r=".9" fill="#cfc4c0" opacity=".8"/>
<path d="M347.3 199.3L383.4 199.3" stroke="#a8a09c" stroke-width="0.5" fill="none" opacity=".75"/>
<circle cx="347.3" cy="199.3" r=".9" fill="#cfc4c0" opacity=".8"/>
<circle cx="383.4" cy="199.3" r=".9" fill="#cfc4c0" opacity=".8"/>
<circle cx="371.4" cy="199.3" r=".9" fill="#cfc4c0" opacity=".8"/>
<path d="M238.6 209.1L281.7 209.1" stroke="#a8a09c" stroke-width="0.5" fill="none" opacity=".75"/>
<circle cx="238.6" cy="209.1" r=".9" fill="#cfc4c0" opacity=".8"/>
<circle cx="281.7" cy="209.1" r=".9" fill="#cfc4c0" opacity=".8"/>
<circle cx="266.7" cy="209.1" r=".9" fill="#cfc4c0" opacity=".8"/>
<path d="M367.7 394.0L405.2 394.0" stroke="#a8a09c" stroke-width="0.5" fill="none" opacity=".75"/>
<circle cx="367.7" cy="394.0" r=".9" fill="#cfc4c0" opacity=".8"/>
<circle cx="405.2" cy="394.0" r=".9" fill="#cfc4c0" opacity=".8"/>
<circle cx="393.8" cy="394.0" r=".9" fill="#cfc4c0" opacity=".8"/>
<path d="M313.1 265.8L348.5 265.8" stroke="#b3a49e" stroke-width="0.5" fill="none" opacity=".75"/>
<circle cx="313.1" cy="265.8" r=".9" fill="#cfc4c0" opacity=".8"/>
<circle cx="348.5" cy="265.8" r=".9" fill="#cfc4c0" opacity=".8"/>
<circle cx="326.2" cy="265.8" r=".9" fill="#cfc4c0" opacity=".8"/>
<path d="M132.8 226.8L179.6 226.8" stroke="#c0b0aa" stroke-width="0.5" fill="none" opacity=".75"/>
<circle cx="132.8" cy="226.8" r=".9" fill="#cfc4c0" opacity=".8"/>
<circle cx="179.6" cy="226.8" r=".9" fill="#cfc4c0" opacity=".8"/>
<circle cx="150.2" cy="226.8" r=".9" fill="#cfc4c0" opacity=".8"/>
<path d="M152.8 203.6L201.8 203.6" stroke="#c0b0aa" stroke-width="0.5" fill="none" opacity=".75"/>
<circle cx="152.8" cy="203.6" r=".9" fill="#cfc4c0" opacity=".8"/>
<circle cx="201.8" cy="203.6" r=".9" fill="#cfc4c0" opacity=".8"/>
<circle cx="178.6" cy="203.6" r=".9" fill="#cfc4c0" opacity=".8"/>
<path d="M421.2 348.0L469.4 348.0" stroke="#c0b0aa" stroke-width="0.5" fill="none" opacity=".75"/>
<circle cx="421.2" cy="348.0" r=".9" fill="#cfc4c0" opacity=".8"/>
<circle cx="469.4" cy="348.0" r=".9" fill="#cfc4c0" opacity=".8"/>
<circle cx="448.3" cy="348.0" r=".9" fill="#cfc4c0" opacity=".8"/>
<path d="M335.9 286.0L400.1 286.0" stroke="#c0b0aa" stroke-width="0.5" fill="none" opacity=".75"/>
<circle cx="335.9" cy="286.0" r=".9" fill="#cfc4c0" opacity=".8"/>
<circle cx="400.1" cy="286.0" r=".9" fill="#cfc4c0" opacity=".8"/>
<circle cx="375.7" cy="286.0" r=".9" fill="#cfc4c0" opacity=".8"/>
<path d="M197.0 270.7L226.6 270.7" stroke="#c0b0aa" stroke-width="0.5" fill="none" opacity=".75"/>
<circle cx="197.0" cy="270.7" r=".9" fill="#cfc4c0" opacity=".8"/>
<circle cx="226.6" cy="270.7" r=".9" fill="#cfc4c0" opacity=".8"/>
<circle cx="210.6" cy="270.7" r=".9" fill="#cfc4c0" opacity=".8"/>
<path d="M116.2 425.9L161.1 425.9" stroke="#b3a49e" stroke-width="0.5" fill="none" opacity=".75"/>
<circle cx="116.2" cy="425.9" r=".9" fill="#cfc4c0" opacity=".8"/>
<circle cx="161.1" cy="425.9" r=".9" fill="#cfc4c0" opacity=".8"/>
<circle cx="135.8" cy="425.9" r=".9" fill="#cfc4c0" opacity=".8"/>
<path d="M61.0 165.1L92.8 165.1" stroke="#b3a49e" stroke-width="0.5" fill="none" opacity=".75"/>
<circle cx="61.0" cy="165.1" r=".9" fill="#cfc4c0" opacity=".8"/>
<circle cx="92.8" cy="165.1" r=".9" fill="#cfc4c0" opacity=".8"/>
<circle cx="82.6" cy="165.1" r=".9" fill="#cfc4c0" opacity=".8"/>
<path d="M285.5 183.6L319.9 183.6" stroke="#a8a09c" stroke-width="0.5" fill="none" opacity=".75"/>
<circle cx="285.5" cy="183.6" r=".9" fill="#cfc4c0" opacity=".8"/>
<circle cx="319.9" cy="183.6" r=".9" fill="#cfc4c0" opacity=".8"/>
<circle cx="297.8" cy="183.6" r=".9" fill="#cfc4c0" opacity=".8"/>
<path d="M140.9 257.1L182.3 257.1" stroke="#b3a49e" stroke-width="0.5" fill="none" opacity=".75"/>
<circle cx="140.9" cy="257.1" r=".9" fill="#cfc4c0" opacity=".8"/>
<circle cx="182.3" cy="257.1" r=".9" fill="#cfc4c0" opacity=".8"/>
<circle cx="155.2" cy="257.1" r=".9" fill="#cfc4c0" opacity=".8"/>
<path d="M235.2 424.1L281.8 424.1" stroke="#a8a09c" stroke-width="0.5" fill="none" opacity=".75"/>
<circle cx="235.2" cy="424.1" r=".9" fill="#cfc4c0" opacity=".8"/>
<circle cx="281.8" cy="424.1" r=".9" fill="#cfc4c0" opacity=".8"/>
<circle cx="250.8" cy="424.1" r=".9" fill="#cfc4c0" opacity=".8"/>
<path d="M80.9 255.8L117.8 255.8" stroke="#c0b0aa" stroke-width="0.5" fill="none" opacity=".75"/>
<circle cx="80.9" cy="255.8" r=".9" fill="#cfc4c0" opacity=".8"/>
<circle cx="117.8" cy="255.8" r=".9" fill="#cfc4c0" opacity=".8"/>
<circle cx="94.3" cy="255.8" r=".9" fill="#cfc4c0" opacity=".8"/>
<path d="M49.2 417.0L98.0 417.0" stroke="#b3a49e" stroke-width="0.5" fill="none" opacity=".75"/>
<circle cx="49.2" cy="417.0" r=".9" fill="#cfc4c0" opacity=".8"/>
<circle cx="98.0" cy="417.0" r=".9" fill="#cfc4c0" opacity=".8"/>
<circle cx="77.3" cy="417.0" r=".9" fill="#cfc4c0" opacity=".8"/>
<path d="M405.7 365.9L444.1 365.9" stroke="#c0b0aa" stroke-width="0.5" fill="none" opacity=".75"/>
<circle cx="405.7" cy="365.9" r=".9" fill="#cfc4c0" opacity=".8"/>
<circle cx="444.1" cy="365.9" r=".9" fill="#cfc4c0" opacity=".8"/>
<circle cx="430.4" cy="365.9" r=".9" fill="#cfc4c0" opacity=".8"/>
<path d="M318.5 234.2L360.0 234.2" stroke="#b3a49e" stroke-width="0.5" fill="none" opacity=".75"/>
<circle cx="318.5" cy="234.2" r=".9" fill="#cfc4c0" opacity=".8"/>
<circle cx="360.0" cy="234.2" r=".9" fill="#cfc4c0" opacity=".8"/>
<circle cx="336.8" cy="234.2" r=".9" fill="#cfc4c0" opacity=".8"/>
<path d="M129.1 308.5L176.7 308.5" stroke="#c0b0aa" stroke-width="0.5" fill="none" opacity=".75"/>
<circle cx="129.1" cy="308.5" r=".9" fill="#cfc4c0" opacity=".8"/>
<circle cx="176.7" cy="308.5" r=".9" fill="#cfc4c0" opacity=".8"/>
<circle cx="147.7" cy="308.5" r=".9" fill="#cfc4c0" opacity=".8"/>
<path d="M364.6 426.0L428.0 426.0" stroke="#b3a49e" stroke-width="0.5" fill="none" opacity=".75"/>
<circle cx="364.6" cy="426.0" r=".9" fill="#cfc4c0" opacity=".8"/>
<circle cx="428.0" cy="426.0" r=".9" fill="#cfc4c0" opacity=".8"/>
<circle cx="404.4" cy="426.0" r=".9" fill="#cfc4c0" opacity=".8"/>
<path d="M335.9 225.1L384.2 225.1" stroke="#a8a09c" stroke-width="0.5" fill="none" opacity=".75"/>
<circle cx="335.9" cy="225.1" r=".9" fill="#cfc4c0" opacity=".8"/>
<circle cx="384.2" cy="225.1" r=".9" fill="#cfc4c0" opacity=".8"/>
<circle cx="364.6" cy="225.1" r=".9" fill="#cfc4c0" opacity=".8"/>
<path d="M435.8 374.4L482.1 374.4" stroke="#b3a49e" stroke-width="0.5" fill="none" opacity=".75"/>
<circle cx="435.8" cy="374.4" r=".9" fill="#cfc4c0" opacity=".8"/>
<circle cx="482.1" cy="374.4" r=".9" fill="#cfc4c0" opacity=".8"/>
<circle cx="462.5" cy="374.4" r=".9" fill="#cfc4c0" opacity=".8"/>
<path d="M422.6 283.5L489.8 283.5" stroke="#a8a09c" stroke-width="0.5" fill="none" opacity=".75"/>
<circle cx="422.6" cy="283.5" r=".9" fill="#cfc4c0" opacity=".8"/>
<circle cx="489.8" cy="283.5" r=".9" fill="#cfc4c0" opacity=".8"/>
<circle cx="468.4" cy="283.5" r=".9" fill="#cfc4c0" opacity=".8"/>
<path d="M185.9 223.4L221.1 223.4" stroke="#b3a49e" stroke-width="0.5" fill="none" opacity=".75"/>
<circle cx="185.9" cy="223.4" r=".9" fill="#cfc4c0" opacity=".8"/>
<circle cx="221.1" cy="223.4" r=".9" fill="#cfc4c0" opacity=".8"/>
<circle cx="201.2" cy="223.4" r=".9" fill="#cfc4c0" opacity=".8"/>
<path d="M233.1 426.1L285.5 426.1" stroke="#b3a49e" stroke-width="0.5" fill="none" opacity=".75"/>
<circle cx="233.1" cy="426.1" r=".9" fill="#cfc4c0" opacity=".8"/>
<circle cx="285.5" cy="426.1" r=".9" fill="#cfc4c0" opacity=".8"/>
<circle cx="258.9" cy="426.1" r=".9" fill="#cfc4c0" opacity=".8"/>
<path d="M301.2 376.9L330.0 376.9" stroke="#c0b0aa" stroke-width="0.5" fill="none" opacity=".75"/>
<circle cx="301.2" cy="376.9" r=".9" fill="#cfc4c0" opacity=".8"/>
<circle cx="330.0" cy="376.9" r=".9" fill="#cfc4c0" opacity=".8"/>
<circle cx="311.2" cy="376.9" r=".9" fill="#cfc4c0" opacity=".8"/>
<path d="M195.4 353.5L229.4 353.5" stroke="#b3a49e" stroke-width="0.5" fill="none" opacity=".75"/>
<circle cx="195.4" cy="353.5" r=".9" fill="#cfc4c0" opacity=".8"/>
<circle cx="229.4" cy="353.5" r=".9" fill="#cfc4c0" opacity=".8"/>
<circle cx="211.5" cy="353.5" r=".9" fill="#cfc4c0" opacity=".8"/>
<path d="M294.3 188.0L361.9 188.0" stroke="#c0b0aa" stroke-width="0.5" fill="none" opacity=".75"/>
<circle cx="294.3" cy="188.0" r=".9" fill="#cfc4c0" opacity=".8"/>
<circle cx="361.9" cy="188.0" r=".9" fill="#cfc4c0" opacity=".8"/>
<circle cx="325.3" cy="188.0" r=".9" fill="#cfc4c0" opacity=".8"/>
<path d="M212.6 387.2L212.6 432.6" stroke="#b0a29c" stroke-width="0.5" fill="none" opacity=".7"/>
<circle cx="212.6" cy="387.2" r=".9" fill="#cfc4c0" opacity=".8"/>
<circle cx="212.6" cy="432.6" r=".9" fill="#cfc4c0" opacity=".8"/>
<path d="M113.1 190.5L113.1 215.8" stroke="#b0a29c" stroke-width="0.5" fill="none" opacity=".7"/>
<circle cx="113.1" cy="190.5" r=".9" fill="#cfc4c0" opacity=".8"/>
<circle cx="113.1" cy="215.8" r=".9" fill="#cfc4c0" opacity=".8"/>
<path d="M429.1 353.6L429.1 378.7" stroke="#b0a29c" stroke-width="0.5" fill="none" opacity=".7"/>
<circle cx="429.1" cy="353.6" r=".9" fill="#cfc4c0" opacity=".8"/>
<circle cx="429.1" cy="378.7" r=".9" fill="#cfc4c0" opacity=".8"/>
<path d="M395.4 395.3L395.4 438.3" stroke="#b0a29c" stroke-width="0.5" fill="none" opacity=".7"/>
<circle cx="395.4" cy="395.3" r=".9" fill="#cfc4c0" opacity=".8"/>
<circle cx="395.4" cy="438.3" r=".9" fill="#cfc4c0" opacity=".8"/>
<path d="M190.7 291.7L190.7 316.3" stroke="#b0a29c" stroke-width="0.5" fill="none" opacity=".7"/>
<circle cx="190.7" cy="291.7" r=".9" fill="#cfc4c0" opacity=".8"/>
<circle cx="190.7" cy="316.3" r=".9" fill="#cfc4c0" opacity=".8"/>
<path d="M46.1 393.0L46.1 435.8" stroke="#b0a29c" stroke-width="0.5" fill="none" opacity=".7"/>
<circle cx="46.1" cy="393.0" r=".9" fill="#cfc4c0" opacity=".8"/>
<circle cx="46.1" cy="435.8" r=".9" fill="#cfc4c0" opacity=".8"/>
<path d="M266.4 384.1L266.4 419.3" stroke="#b0a29c" stroke-width="0.5" fill="none" opacity=".7"/>
<circle cx="266.4" cy="384.1" r=".9" fill="#cfc4c0" opacity=".8"/>
<circle cx="266.4" cy="419.3" r=".9" fill="#cfc4c0" opacity=".8"/>
<path d="M414.8 358.3L414.8 385.7" stroke="#b0a29c" stroke-width="0.5" fill="none" opacity=".7"/>
<circle cx="414.8" cy="358.3" r=".9" fill="#cfc4c0" opacity=".8"/>
<circle cx="414.8" cy="385.7" r=".9" fill="#cfc4c0" opacity=".8"/>
<path d="M148.3 230.3L148.3 258.7" stroke="#b0a29c" stroke-width="0.5" fill="none" opacity=".7"/>
<circle cx="148.3" cy="230.3" r=".9" fill="#cfc4c0" opacity=".8"/>
<circle cx="148.3" cy="258.7" r=".9" fill="#cfc4c0" opacity=".8"/>
<path d="M292.2 222.2L292.2 256.9" stroke="#b0a29c" stroke-width="0.5" fill="none" opacity=".7"/>
<circle cx="292.2" cy="222.2" r=".9" fill="#cfc4c0" opacity=".8"/>
<circle cx="292.2" cy="256.9" r=".9" fill="#cfc4c0" opacity=".8"/>
<path d="M96.4 378.4L96.4 410.8" stroke="#b0a29c" stroke-width="0.5" fill="none" opacity=".7"/>
<circle cx="96.4" cy="378.4" r=".9" fill="#cfc4c0" opacity=".8"/>
<circle cx="96.4" cy="410.8" r=".9" fill="#cfc4c0" opacity=".8"/>
<path d="M237.0 300.0L237.0 351.7" stroke="#b0a29c" stroke-width="0.5" fill="none" opacity=".7"/>
<circle cx="237.0" cy="300.0" r=".9" fill="#cfc4c0" opacity=".8"/>
<circle cx="237.0" cy="351.7" r=".9" fill="#cfc4c0" opacity=".8"/>
<path d="M220.9 380.3L220.9 417.8" stroke="#b0a29c" stroke-width="0.5" fill="none" opacity=".7"/>
<circle cx="220.9" cy="380.3" r=".9" fill="#cfc4c0" opacity=".8"/>
<circle cx="220.9" cy="417.8" r=".9" fill="#cfc4c0" opacity=".8"/>
<path d="M268.7 285.6L268.7 306.3" stroke="#b0a29c" stroke-width="0.5" fill="none" opacity=".7"/>
<circle cx="268.7" cy="285.6" r=".9" fill="#cfc4c0" opacity=".8"/>
<circle cx="268.7" cy="306.3" r=".9" fill="#cfc4c0" opacity=".8"/>
<path d="M229.3 203.9L229.3 224.1" stroke="#b0a29c" stroke-width="0.5" fill="none" opacity=".7"/>
<circle cx="229.3" cy="203.9" r=".9" fill="#cfc4c0" opacity=".8"/>
<circle cx="229.3" cy="224.1" r=".9" fill="#cfc4c0" opacity=".8"/>
<path d="M383.6 201.4L383.6 237.9" stroke="#b0a29c" stroke-width="0.5" fill="none" opacity=".7"/>
<circle cx="383.6" cy="201.4" r=".9" fill="#cfc4c0" opacity=".8"/>
<circle cx="383.6" cy="237.9" r=".9" fill="#cfc4c0" opacity=".8"/>
<path d="M351.8 293.6L351.8 325.0" stroke="#b0a29c" stroke-width="0.5" fill="none" opacity=".7"/>
<circle cx="351.8" cy="293.6" r=".9" fill="#cfc4c0" opacity=".8"/>
<circle cx="351.8" cy="325.0" r=".9" fill="#cfc4c0" opacity=".8"/>
<path d="M262.9 293.3L262.9 340.8" stroke="#b0a29c" stroke-width="0.5" fill="none" opacity=".7"/>
<circle cx="262.9" cy="293.3" r=".9" fill="#cfc4c0" opacity=".8"/>
<circle cx="262.9" cy="340.8" r=".9" fill="#cfc4c0" opacity=".8"/>
<path d="M85.6 294.5L85.6 323.2" stroke="#b0a29c" stroke-width="0.5" fill="none" opacity=".7"/>
<circle cx="85.6" cy="294.5" r=".9" fill="#cfc4c0" opacity=".8"/>
<circle cx="85.6" cy="323.2" r=".9" fill="#cfc4c0" opacity=".8"/>
<path d="M159.1 345.3L159.1 383.1" stroke="#b0a29c" stroke-width="0.5" fill="none" opacity=".7"/>
<circle cx="159.1" cy="345.3" r=".9" fill="#cfc4c0" opacity=".8"/>
<circle cx="159.1" cy="383.1" r=".9" fill="#cfc4c0" opacity=".8"/>
<path d="M281.5 342.4L281.5 394.3" stroke="#b0a29c" stroke-width="0.5" fill="none" opacity=".7"/>
<circle cx="281.5" cy="342.4" r=".9" fill="#cfc4c0" opacity=".8"/>
<circle cx="281.5" cy="394.3" r=".9" fill="#cfc4c0" opacity=".8"/>
<path d="M230.6 307.0L230.6 344.7" stroke="#b0a29c" stroke-width="0.5" fill="none" opacity=".7"/>
<circle cx="230.6" cy="307.0" r=".9" fill="#cfc4c0" opacity=".8"/>
<circle cx="230.6" cy="344.7" r=".9" fill="#cfc4c0" opacity=".8"/>
<path d="M260.2 326.3L260.2 362.1" stroke="#b0a29c" stroke-width="0.5" fill="none" opacity=".7"/>
<circle cx="260.2" cy="326.3" r=".9" fill="#cfc4c0" opacity=".8"/>
<circle cx="260.2" cy="362.1" r=".9" fill="#cfc4c0" opacity=".8"/>
<path d="M269.3 274.7L269.3 327.7" stroke="#b0a29c" stroke-width="0.5" fill="none" opacity=".7"/>
<circle cx="269.3" cy="274.7" r=".9" fill="#cfc4c0" opacity=".8"/>
<circle cx="269.3" cy="327.7" r=".9" fill="#cfc4c0" opacity=".8"/>
<path d="M340.7 370.4L340.7 423.3" stroke="#b0a29c" stroke-width="0.5" fill="none" opacity=".7"/>
<circle cx="340.7" cy="370.4" r=".9" fill="#cfc4c0" opacity=".8"/>
<circle cx="340.7" cy="423.3" r=".9" fill="#cfc4c0" opacity=".8"/>
<path d="M151.6 294.3L151.6 347.3" stroke="#b0a29c" stroke-width="0.5" fill="none" opacity=".7"/>
<circle cx="151.6" cy="294.3" r=".9" fill="#cfc4c0" opacity=".8"/>
<circle cx="151.6" cy="347.3" r=".9" fill="#cfc4c0" opacity=".8"/>
<path d="M401.2 192.9L401.2 217.2" stroke="#b0a29c" stroke-width="0.5" fill="none" opacity=".7"/>
<circle cx="401.2" cy="192.9" r=".9" fill="#cfc4c0" opacity=".8"/>
<circle cx="401.2" cy="217.2" r=".9" fill="#cfc4c0" opacity=".8"/>
<path d="M230.1 177.4L230.1 205.8" stroke="#b0a29c" stroke-width="0.5" fill="none" opacity=".7"/>
<circle cx="230.1" cy="177.4" r=".9" fill="#cfc4c0" opacity=".8"/>
<circle cx="230.1" cy="205.8" r=".9" fill="#cfc4c0" opacity=".8"/>
<path d="M71.4 320.7L71.4 368.1" stroke="#b0a29c" stroke-width="0.5" fill="none" opacity=".7"/>
<circle cx="71.4" cy="320.7" r=".9" fill="#cfc4c0" opacity=".8"/>
<circle cx="71.4" cy="368.1" r=".9" fill="#cfc4c0" opacity=".8"/>
<path d="M425.7 197.1L425.7 242.1" stroke="#b0a29c" stroke-width="0.5" fill="none" opacity=".7"/>
<circle cx="425.7" cy="197.1" r=".9" fill="#cfc4c0" opacity=".8"/>
<circle cx="425.7" cy="242.1" r=".9" fill="#cfc4c0" opacity=".8"/>
<path d="M323.9 194.3L323.9 245.2" stroke="#b0a29c" stroke-width="0.5" fill="none" opacity=".7"/>
<circle cx="323.9" cy="194.3" r=".9" fill="#cfc4c0" opacity=".8"/>
<circle cx="323.9" cy="245.2" r=".9" fill="#cfc4c0" opacity=".8"/>
<path d="M456.0 212.7L456.0 266.0" stroke="#b0a29c" stroke-width="0.5" fill="none" opacity=".7"/>
<circle cx="456.0" cy="212.7" r=".9" fill="#cfc4c0" opacity=".8"/>
<circle cx="456.0" cy="266.0" r=".9" fill="#cfc4c0" opacity=".8"/>
<path d="M211.3 276.9L211.3 331.6" stroke="#b0a29c" stroke-width="0.5" fill="none" opacity=".7"/>
<circle cx="211.3" cy="276.9" r=".9" fill="#cfc4c0" opacity=".8"/>
<circle cx="211.3" cy="331.6" r=".9" fill="#cfc4c0" opacity=".8"/>
<path d="M398.0 198.8L398.0 233.9" stroke="#b0a29c" stroke-width="0.5" fill="none" opacity=".7"/>
<circle cx="398.0" cy="198.8" r=".9" fill="#cfc4c0" opacity=".8"/>
<circle cx="398.0" cy="233.9" r=".9" fill="#cfc4c0" opacity=".8"/>
<path d="M261.7 241.4L261.7 268.2" stroke="#b0a29c" stroke-width="0.5" fill="none" opacity=".7"/>
<circle cx="261.7" cy="241.4" r=".9" fill="#cfc4c0" opacity=".8"/>
<circle cx="261.7" cy="268.2" r=".9" fill="#cfc4c0" opacity=".8"/>
<path d="M177.0 333.3L177.0 354.0" stroke="#b0a29c" stroke-width="0.5" fill="none" opacity=".7"/>
<circle cx="177.0" cy="333.3" r=".9" fill="#cfc4c0" opacity=".8"/>
<circle cx="177.0" cy="354.0" r=".9" fill="#cfc4c0" opacity=".8"/>
<rect x="47" y="208" width="28" height="4.5" fill="none" stroke="#a09088" stroke-width=".45" opacity=".8"/>
<text x="61.0" y="206.4" font-size="3" fill="#a8988f" text-anchor="middle" opacity=".85">ROOM 05.84</text>
<rect x="104" y="182" width="24" height="4.5" fill="none" stroke="#a09088" stroke-width=".45" opacity=".8"/>
<text x="116.0" y="180.4" font-size="3" fill="#a8988f" text-anchor="middle" opacity=".85">ROOM 08.06</text>
<rect x="104" y="240" width="26" height="4.5" fill="none" stroke="#a09088" stroke-width=".45" opacity=".8"/>
<text x="117.0" y="238.4" font-size="3" fill="#a8988f" text-anchor="middle" opacity=".85">ROOM 08.00</text>
<rect x="150" y="180" width="26" height="4.5" fill="none" stroke="#a09088" stroke-width=".45" opacity=".8"/>
<text x="163.0" y="178.4" font-size="3" fill="#a8988f" text-anchor="middle" opacity=".85">ROOM 06.00</text>
<rect x="247" y="176" width="30" height="4.5" fill="none" stroke="#a09088" stroke-width=".45" opacity=".8"/>
<text x="262.0" y="174.4" font-size="3" fill="#a8988f" text-anchor="middle" opacity=".85">ROOM 01.78</text>
<rect x="196" y="170" width="22" height="4.5" fill="none" stroke="#a09088" stroke-width=".45" opacity=".8"/>
<text x="207.0" y="168.4" font-size="3" fill="#a8988f" text-anchor="middle" opacity=".85">ROOM 04.60</text>
<rect x="200" y="236" width="26" height="4.5" fill="none" stroke="#a09088" stroke-width=".45" opacity=".8"/>
<text x="213.0" y="234.4" font-size="3" fill="#a8988f" text-anchor="middle" opacity=".85">ROOM 05.78</text>
<rect x="98" y="318" width="30" height="4.5" fill="none" stroke="#a09088" stroke-width=".45" opacity=".8"/>
<text x="113.0" y="316.4" font-size="3" fill="#a8988f" text-anchor="middle" opacity=".85">ROOM 02.54</text>
<rect x="147" y="318" width="28" height="4.5" fill="none" stroke="#a09088" stroke-width=".45" opacity=".8"/>
<text x="161.0" y="316.4" font-size="3" fill="#a8988f" text-anchor="middle" opacity=".85">ROOM 03.54</text>
<rect x="56" y="298" width="22" height="4.5" fill="none" stroke="#a09088" stroke-width=".45" opacity=".8"/>
<text x="67.0" y="296.4" font-size="3" fill="#a8988f" text-anchor="middle" opacity=".85">ROOM 05.84</text>
<rect x="50" y="384" width="30" height="4.5" fill="none" stroke="#a09088" stroke-width=".45" opacity=".8"/>
<text x="65.0" y="382.4" font-size="3" fill="#a8988f" text-anchor="middle" opacity=".85">ROOM 08.72</text>
<rect x="127" y="388" width="28" height="4.5" fill="none" stroke="#a09088" stroke-width=".45" opacity=".8"/>
<text x="141.0" y="386.4" font-size="3" fill="#a8988f" text-anchor="middle" opacity=".85">ROOM 07.84</text>
<rect x="203" y="385" width="30" height="4.5" fill="none" stroke="#a09088" stroke-width=".45" opacity=".8"/>
<text x="218.0" y="383.4" font-size="3" fill="#a8988f" text-anchor="middle" opacity=".85">ROOM 08.75</text>
<rect x="300" y="297" width="26" height="4.5" fill="none" stroke="#a09088" stroke-width=".45" opacity=".8"/>
<text x="313.0" y="295.4" font-size="3" fill="#a8988f" text-anchor="middle" opacity=".85">ROOM 03.81</text>
<rect x="297" y="339" width="28" height="4.5" fill="none" stroke="#a09088" stroke-width=".45" opacity=".8"/>
<text x="311.0" y="337.4" font-size="3" fill="#a8988f" text-anchor="middle" opacity=".85">ROOM 00.27</text>
<rect x="414" y="171" width="28" height="4.5" fill="none" stroke="#a09088" stroke-width=".45" opacity=".8"/>
<text x="428.0" y="169.4" font-size="3" fill="#a8988f" text-anchor="middle" opacity=".85">ROOM 00.63</text>
<rect x="444" y="385" width="22" height="4.5" fill="none" stroke="#a09088" stroke-width=".45" opacity=".8"/>
<text x="455.0" y="383.4" font-size="3" fill="#a8988f" text-anchor="middle" opacity=".85">ROOM 03.75</text>
<rect x="420" y="416" width="24" height="4.5" fill="none" stroke="#a09088" stroke-width=".45" opacity=".8"/>
<text x="432.0" y="414.4" font-size="3" fill="#a8988f" text-anchor="middle" opacity=".85">ROOM 06.78</text>
<rect x="345" y="380" width="22" height="4.5" fill="none" stroke="#a09088" stroke-width=".45" opacity=".8"/>
<text x="356.0" y="378.4" font-size="3" fill="#a8988f" text-anchor="middle" opacity=".85">ROOM 03.60</text>
<path d="M37 279L80 361" stroke="#8a6a5a" stroke-width="0.5" fill="none" />
<path d="M80 279L37 361" stroke="#8a6a5a" stroke-width="0.5" fill="none" />
<path d="M396 192L396 211" stroke="#777" stroke-width="0.4" fill="none" />
<path d="M396 217L396 235" stroke="#777" stroke-width="0.4" fill="none" />
<path d="M400 192L400 211" stroke="#777" stroke-width="0.4" fill="none" />
<path d="M400 217L400 235" stroke="#777" stroke-width="0.4" fill="none" />
<path d="M404 192L404 211" stroke="#777" stroke-width="0.4" fill="none" />
<path d="M404 217L404 235" stroke="#777" stroke-width="0.4" fill="none" />
<path d="M408 192L408 211" stroke="#777" stroke-width="0.4" fill="none" />
<path d="M408 217L408 235" stroke="#777" stroke-width="0.4" fill="none" />
<path d="M412 192L412 211" stroke="#777" stroke-width="0.4" fill="none" />
<path d="M412 217L412 235" stroke="#777" stroke-width="0.4" fill="none" />
<path d="M416 192L416 211" stroke="#777" stroke-width="0.4" fill="none" />
<path d="M416 217L416 235" stroke="#777" stroke-width="0.4" fill="none" />
<path d="M420 192L420 211" stroke="#777" stroke-width="0.4" fill="none" />
<path d="M420 217L420 235" stroke="#777" stroke-width="0.4" fill="none" />
<path d="M424 192L424 211" stroke="#777" stroke-width="0.4" fill="none" />
<path d="M424 217L424 235" stroke="#777" stroke-width="0.4" fill="none" />
<path d="M428 192L428 211" stroke="#777" stroke-width="0.4" fill="none" />
<path d="M428 217L428 235" stroke="#777" stroke-width="0.4" fill="none" />
<path d="M432 192L432 211" stroke="#777" stroke-width="0.4" fill="none" />
<path d="M432 217L432 235" stroke="#777" stroke-width="0.4" fill="none" />
<path d="M436 192L436 211" stroke="#777" stroke-width="0.4" fill="none" />
<path d="M436 217L436 235" stroke="#777" stroke-width="0.4" fill="none" />
<path d="M440 192L440 211" stroke="#777" stroke-width="0.4" fill="none" />
<path d="M440 217L440 235" stroke="#777" stroke-width="0.4" fill="none" />
<path d="M444 192L444 211" stroke="#777" stroke-width="0.4" fill="none" />
<path d="M444 217L444 235" stroke="#777" stroke-width="0.4" fill="none" />
<path d="M448 192L448 211" stroke="#777" stroke-width="0.4" fill="none" />
<path d="M448 217L448 235" stroke="#777" stroke-width="0.4" fill="none" />
<path d="M452 192L452 211" stroke="#777" stroke-width="0.4" fill="none" />
<path d="M452 217L452 235" stroke="#777" stroke-width="0.4" fill="none" />
<path d="M408 197v8l5-4zM414 224v8l-5-4zM446 209h7l-3.500 6z" fill="#8c8c8c"/>
<path d="M119 288L119 402" stroke="#b0241f" stroke-width="0.8" fill="none" />
<path d="M141 338L141 404" stroke="#b0241f" stroke-width="0.8" fill="none" />
<path d="M101 222L101 300" stroke="#b0241f" stroke-width="0.8" fill="none" />
<path d="M62 166L62 268" stroke="#b0241f" stroke-width="0.8" fill="none" />
<path d="M150 222L150 300" stroke="#b0241f" stroke-width="0.8" fill="none" />
<path d="M176 160L176 300" stroke="#b0241f" stroke-width="0.8" fill="none" />
<path d="M197 222L197 402" stroke="#b0241f" stroke-width="0.8" fill="none" />
<path d="M228 300L228 420" stroke="#b0241f" stroke-width="0.8" fill="none" />
<path d="M243 205L243 300" stroke="#b0241f" stroke-width="0.8" fill="none" />
<path d="M300 285L300 438" stroke="#b0241f" stroke-width="0.8" fill="none" />
<path d="M342 300L342 440" stroke="#b0241f" stroke-width="0.8" fill="none" />
<path d="M270 160L270 204" stroke="#b0241f" stroke-width="0.8" fill="none" />
<path d="M214 160L214 204" stroke="#b0241f" stroke-width="0.8" fill="none" />
<path d="M84 295L330 295" stroke="#b0241f" stroke-width="0.8" fill="none" />
<path d="M90 236L260 236" stroke="#b0241f" stroke-width="0.8" fill="none" />
<path d="M40 180L130 180" stroke="#b0241f" stroke-width="0.8" fill="none" />
<path d="M40 250L88 250" stroke="#b0241f" stroke-width="0.8" fill="none" />
<path d="M128 335L262 335" stroke="#b0241f" stroke-width="0.8" fill="none" />
<path d="M84 362L262 362" stroke="#b0241f" stroke-width="0.8" fill="none" />
<path d="M84 392L262 392" stroke="#b0241f" stroke-width="0.8" fill="none" />
<path d="M120 413L330 413" stroke="#b0241f" stroke-width="0.8" fill="none" />
<path d="M160 172L330 172" stroke="#b0241f" stroke-width="0.8" fill="none" />
<path d="M262 322L330 322" stroke="#b0241f" stroke-width="0.8" fill="none" />
<rect x="100" y="225" width="50" height="37" fill="none" opacity="1" stroke="#b0241f" stroke-width="0.7"/>
<rect x="150" y="290" width="50" height="50" fill="none" opacity="1" stroke="#b0241f" stroke-width="0.7"/>
<rect x="44" y="170" width="40" height="92" fill="none" opacity="0.8" stroke="#a03020" stroke-width="0.7"/>
<path d="M326 134L326 316" stroke="#e07a1c" stroke-width="1" fill="none" />
<path d="M387 134L387 440" stroke="#e07a1c" stroke-width="0.9" fill="none" />
<path d="M334 160L394 160" stroke="#e07a1c" stroke-width="0.8" fill="none" />
<path d="M340 134L340 200" stroke="#e07a1c" stroke-width="0.7" fill="none" />
<rect x="349" y="140" width="43" height="46" fill="none" opacity="1" stroke="#e07a1c" stroke-width="0.8"/>
<rect x="356" y="196" width="32" height="36" fill="none" opacity="0.9" stroke="#d0701c" stroke-width="0.7"/>
<path d="M326 258L352 258" stroke="#e07a1c" stroke-width="0.8" fill="none" />
<rect x="387.5" y="365" width="62.5" height="25" fill="none" opacity="1" stroke="#e07a1c" stroke-width="0.8"/>
<path d="M405 426L484 426" stroke="#e07a1c" stroke-width="0.9" fill="none" />
<rect x="369" y="404" width="37" height="36" fill="none" opacity="1" stroke="#d89a20" stroke-width="0.8"/>
<path d="M300 200L300 285" stroke="#e07a1c" stroke-width="0.8" fill="none" />
<path d="M293 160L293 204" stroke="#c86a1c" stroke-width="0.7" fill="none" />
<rect x="270" y="280" width="22.5" height="18.7" fill="none" opacity="1" stroke="#c9a21e" stroke-width="0.9"/>
</g>
<path d="M35 405L35 160L88 158.5L190 155L334 150" stroke="#dfa6d6" stroke-width="2.65" fill="none" stroke-linejoin="miter" stroke-linecap="square"/>
<path d="M35 405L35 160L88 158.5L190 155L334 150" stroke="#a8708a" stroke-width="1.15" fill="none" stroke-linejoin="miter" opacity=".8"/>
<path d="M334 180L334 134L394 133L394 148" stroke="#d58a60" stroke-width="2.45" fill="none" stroke-linejoin="miter" stroke-linecap="square"/>
<path d="M334 180L334 134L394 133L394 148" stroke="#a8708a" stroke-width="0.9500000000000002" fill="none" stroke-linejoin="miter" opacity=".8"/>
<path d="M334 180L334 134L394 133L394 148" stroke="#f0d0c0" stroke-width="0.5" fill="none" opacity=".8"/>
<path d="M394 148L459 147L459 186" stroke="#dfa6d6" stroke-width="2.65" fill="none" stroke-linejoin="miter" stroke-linecap="square"/>
<path d="M394 148L459 147L459 186" stroke="#a8708a" stroke-width="1.15" fill="none" stroke-linejoin="miter" opacity=".8"/>
<path d="M462 186L462 291" stroke="#9a44a6" stroke-width="3.25" fill="none" stroke-linejoin="miter" stroke-linecap="square"/>
<path d="M461 186L461 291" stroke="#d9a0dc" stroke-width="0.6" fill="none" />
<path d="M394 310.5L485 290" stroke="#a850b0" stroke-width="3.25" fill="none" stroke-linejoin="miter" stroke-linecap="square"/>
<path d="M394 310.5L485 290" stroke="#a8708a" stroke-width="1.75" fill="none" stroke-linejoin="miter" opacity=".8"/>
<path d="M394 310.5L485 290" stroke="#e8c8ec" stroke-width="0.5" fill="none" opacity=".8"/>
<path d="M447.5 262L447.5 378" stroke="#dfa6d6" stroke-width="1.85" fill="none" stroke-linejoin="miter" stroke-linecap="square"/>
<path d="M447.5 262L447.5 378" stroke="#a8708a" stroke-width="0.7" fill="none" stroke-linejoin="miter" opacity=".8"/>
<path d="M370 355.5L486 355.5" stroke="#dfa6d6" stroke-width="2.45" fill="none" stroke-linejoin="miter" stroke-linecap="square"/>
<path d="M370 355.5L486 355.5" stroke="#a8708a" stroke-width="0.9500000000000002" fill="none" stroke-linejoin="miter" opacity=".8"/>
<path d="M484 355L484 449L405 449L405 443" stroke="#b565bd" stroke-width="2.85" fill="none" stroke-linejoin="miter" stroke-linecap="square"/>
<path d="M484 355L484 449L405 449L405 443" stroke="#a8708a" stroke-width="1.35" fill="none" stroke-linejoin="miter" opacity=".8"/>
<path d="M484 355L484 449L405 449L405 443" stroke="#ecd2f0" stroke-width="0.5" fill="none" opacity=".8"/>
<path d="M34 405L190 421L382 441L405 443.4" stroke="#d58ac8" stroke-width="2" fill="none" />
<path d="M34 404.2L190 420.2L382 440.2L405 442.6" stroke="#e8d25a" stroke-width="0.6" fill="none" />
<path d="M34 406L190 422L382 442L405 444.4" stroke="#f6e6f4" stroke-width="0.5" fill="none" />
<path d="M88.5 158.5L88.5 277" stroke="#dfa6d6" stroke-width="2.45" fill="none" stroke-linejoin="miter" stroke-linecap="square"/>
<path d="M88.5 158.5L88.5 277" stroke="#a8708a" stroke-width="0.9500000000000002" fill="none" stroke-linejoin="miter" opacity=".8"/>
<path d="M35 276L150 276" stroke="#dfa6d6" stroke-width="2.45" fill="none" stroke-linejoin="miter" stroke-linecap="square"/>
<path d="M35 276L150 276" stroke="#a8708a" stroke-width="0.9500000000000002" fill="none" stroke-linejoin="miter" opacity=".8"/>
<path d="M88 218L187 218" stroke="#d9a8d2" stroke-width="2.25" fill="none" stroke-linejoin="miter" stroke-linecap="square"/>
<path d="M88 218L187 218" stroke="#a8708a" stroke-width="0.75" fill="none" stroke-linejoin="miter" opacity=".8"/>
<path d="M132 158L132 187L158 187" stroke="#dfa6d6" stroke-width="2.25" fill="none" stroke-linejoin="miter" stroke-linecap="square"/>
<path d="M132 158L132 187L158 187" stroke="#a8708a" stroke-width="0.75" fill="none" stroke-linejoin="miter" opacity=".8"/>
<path d="M157.5 157L157.5 218" stroke="#dfa6d6" stroke-width="2.25" fill="none" stroke-linejoin="miter" stroke-linecap="square"/>
<path d="M157.5 157L157.5 218" stroke="#a8708a" stroke-width="0.75" fill="none" stroke-linejoin="miter" opacity=".8"/>
<path d="M139 218L139 265L187 265" stroke="#c9b9c6" stroke-width="2.05" fill="none" stroke-linejoin="miter" stroke-linecap="square"/>
<path d="M139 218L139 265L187 265" stroke="#a8708a" stroke-width="0.7" fill="none" stroke-linejoin="miter" opacity=".8"/>
<path d="M139 218L139 265L187 265" stroke="#eee" stroke-width="0.5" fill="none" opacity=".8"/>
<path d="M202 204L187.5 204L187.5 278" stroke="#dfa6d6" stroke-width="2.45" fill="none" stroke-linejoin="miter" stroke-linecap="square"/>
<path d="M202 204L187.5 204L187.5 278" stroke="#a8708a" stroke-width="0.9500000000000002" fill="none" stroke-linejoin="miter" opacity=".8"/>
<path d="M228 153L228 203.5" stroke="#dfa6d6" stroke-width="2.25" fill="none" stroke-linejoin="miter" stroke-linecap="square"/>
<path d="M228 153L228 203.5" stroke="#a8708a" stroke-width="0.75" fill="none" stroke-linejoin="miter" opacity=".8"/>
<path d="M307.5 151L307.5 203" stroke="#dfa6d6" stroke-width="2.25" fill="none" stroke-linejoin="miter" stroke-linecap="square"/>
<path d="M307.5 151L307.5 203" stroke="#a8708a" stroke-width="0.75" fill="none" stroke-linejoin="miter" opacity=".8"/>
<path d="M187 202.8L320 202.8" stroke="#dfa6d6" stroke-width="2.45" fill="none" stroke-linejoin="miter" stroke-linecap="square"/>
<path d="M187 202.8L320 202.8" stroke="#a8708a" stroke-width="0.9500000000000002" fill="none" stroke-linejoin="miter" opacity=".8"/>
<path d="M320 202.8L333.5 180" stroke="#dfa6d6" stroke-width="2.45" fill="none" stroke-linejoin="miter" stroke-linecap="square"/>
<path d="M320 202.8L333.5 180" stroke="#a8708a" stroke-width="0.9500000000000002" fill="none" stroke-linejoin="miter" opacity=".8"/>
<path d="M333 180L345 180L352.5 189" stroke="#a01c3c" stroke-width="2.4" fill="none" />
<path d="M352.5 189L462 188" stroke="#dfa6d6" stroke-width="2.45" fill="none" stroke-linejoin="miter" stroke-linecap="square"/>
<path d="M352.5 189L462 188" stroke="#a8708a" stroke-width="0.9500000000000002" fill="none" stroke-linejoin="miter" opacity=".8"/>
<path d="M323 226L345 204L352.5 192" stroke="#dfa6d6" stroke-width="2.45" fill="none" stroke-linejoin="miter" stroke-linecap="square"/>
<path d="M323 226L345 204L352.5 192" stroke="#a8708a" stroke-width="0.9500000000000002" fill="none" stroke-linejoin="miter" opacity=".8"/>
<path d="M330 219L340 209" stroke="#a01c3c" stroke-width="2.4" fill="none" />
<path d="M280 226L323 226" stroke="#dfa6d6" stroke-width="2.45" fill="none" stroke-linejoin="miter" stroke-linecap="square"/>
<path d="M280 226L323 226" stroke="#a8708a" stroke-width="0.9500000000000002" fill="none" stroke-linejoin="miter" opacity=".8"/>
<path d="M290 226L312 226" stroke="#a01c3c" stroke-width="2.2" fill="none" />
<path d="M281 203L281 277.5" stroke="#dfa6d6" stroke-width="2.25" fill="none" stroke-linejoin="miter" stroke-linecap="square"/>
<path d="M281 203L281 277.5" stroke="#a8708a" stroke-width="0.75" fill="none" stroke-linejoin="miter" opacity=".8"/>
<path d="M261 203L261 277.5" stroke="#c9b9c6" stroke-width="1.85" fill="none" stroke-linejoin="miter" stroke-linecap="square"/>
<path d="M261 203L261 277.5" stroke="#a8708a" stroke-width="0.7" fill="none" stroke-linejoin="miter" opacity=".8"/>
<path d="M261 203L261 277.5" stroke="#eee" stroke-width="0.5" fill="none" opacity=".8"/>
<path d="M352.5 189L352.5 315L326 315" stroke="#dfa6d6" stroke-width="2.45" fill="none" stroke-linejoin="miter" stroke-linecap="square"/>
<path d="M352.5 189L352.5 315L326 315" stroke="#a8708a" stroke-width="0.9500000000000002" fill="none" stroke-linejoin="miter" opacity=".8"/>
<path d="M322.5 226L322.5 249L352 249" stroke="#dfa6d6" stroke-width="2.25" fill="none" stroke-linejoin="miter" stroke-linecap="square"/>
<path d="M322.5 226L322.5 249L352 249" stroke="#a8708a" stroke-width="0.75" fill="none" stroke-linejoin="miter" opacity=".8"/>
<path d="M150 277.5L267.5 277.5" stroke="#dfa6d6" stroke-width="2.45" fill="none" stroke-linejoin="miter" stroke-linecap="square"/>
<path d="M150 277.5L267.5 277.5" stroke="#a8708a" stroke-width="0.9500000000000002" fill="none" stroke-linejoin="miter" opacity=".8"/>
<path d="M281 277.5L370 277.5" stroke="#dfa6d6" stroke-width="2.45" fill="none" stroke-linejoin="miter" stroke-linecap="square"/>
<path d="M281 277.5L370 277.5" stroke="#a8708a" stroke-width="0.9500000000000002" fill="none" stroke-linejoin="miter" opacity=".8"/>
<path d="M82.5 276L82.5 411" stroke="#dfa6d6" stroke-width="2.45" fill="none" stroke-linejoin="miter" stroke-linecap="square"/>
<path d="M82.5 276L82.5 411" stroke="#a8708a" stroke-width="0.9500000000000002" fill="none" stroke-linejoin="miter" opacity=".8"/>
<path d="M35 363.5L82 363.5" stroke="#dfa6d6" stroke-width="2.45" fill="none" stroke-linejoin="miter" stroke-linecap="square"/>
<path d="M35 363.5L82 363.5" stroke="#a8708a" stroke-width="0.9500000000000002" fill="none" stroke-linejoin="miter" opacity=".8"/>
<path d="M82 305L267.5 305" stroke="#d9a8d2" stroke-width="2.25" fill="none" stroke-linejoin="miter" stroke-linecap="square"/>
<path d="M82 305L267.5 305" stroke="#a8708a" stroke-width="0.75" fill="none" stroke-linejoin="miter" opacity=".8"/>
<path d="M127.5 305L127.5 349.5L202 349.5" stroke="#d6bcd2" stroke-width="2.25" fill="none" stroke-linejoin="miter" stroke-linecap="square"/>
<path d="M127.5 305L127.5 349.5L202 349.5" stroke="#a8708a" stroke-width="0.75" fill="none" stroke-linejoin="miter" opacity=".8"/>
<path d="M127.5 305L127.5 349.5L202 349.5" stroke="#f4f4f4" stroke-width="0.5" fill="none" opacity=".8"/>
<path d="M176 305L176 349.5" stroke="#d6bcd2" stroke-width="2.25" fill="none" stroke-linejoin="miter" stroke-linecap="square"/>
<path d="M176 305L176 349.5" stroke="#a8708a" stroke-width="0.75" fill="none" stroke-linejoin="miter" opacity=".8"/>
<path d="M176 305L176 349.5" stroke="#f4f4f4" stroke-width="0.5" fill="none" opacity=".8"/>
<path d="M102.5 276L102.5 305" stroke="#b9a9b6" stroke-width="1.65" fill="none" stroke-linejoin="miter" stroke-linecap="square"/>
<path d="M260.8 305L260.8 428" stroke="#dfa6d6" stroke-width="2.45" fill="none" stroke-linejoin="miter" stroke-linecap="square"/>
<path d="M260.8 305L260.8 428" stroke="#a8708a" stroke-width="0.9500000000000002" fill="none" stroke-linejoin="miter" opacity=".8"/>
<path d="M327 315L327 436" stroke="#e0a0d8" stroke-width="2.65" fill="none" stroke-linejoin="miter" stroke-linecap="square"/>
<path d="M327 315L327 436" stroke="#a8708a" stroke-width="1.15" fill="none" stroke-linejoin="miter" opacity=".8"/>
<path d="M327 355.5L382 355.5" stroke="#dfa6d6" stroke-width="2.45" fill="none" stroke-linejoin="miter" stroke-linecap="square"/>
<path d="M327 355.5L382 355.5" stroke="#a8708a" stroke-width="0.9500000000000002" fill="none" stroke-linejoin="miter" opacity=".8"/>
<path d="M280 428L280 374L327 374" stroke="#dcc0d8" stroke-width="2.25" fill="none" stroke-linejoin="miter" stroke-linecap="square"/>
<path d="M280 428L280 374L327 374" stroke="#a8708a" stroke-width="0.75" fill="none" stroke-linejoin="miter" opacity=".8"/>
<path d="M280 428L280 374L327 374" stroke="#f6f6f6" stroke-width="0.5" fill="none" opacity=".8"/>
<path d="M190 386L260 386" stroke="#b9a9b6" stroke-width="1.85" fill="none" stroke-linejoin="miter" stroke-linecap="square"/>
<path d="M190 386L260 386" stroke="#a8708a" stroke-width="0.7" fill="none" stroke-linejoin="miter" opacity=".8"/>
<path d="M190 386L260 386" stroke="#ddd" stroke-width="0.5" fill="none" opacity=".8"/>
<path d="M257 386L257 428" stroke="#c9a9c6" stroke-width="1.65" fill="none" stroke-linejoin="miter" stroke-linecap="square"/>
<path d="M370 238L462 238" stroke="#dfa6d6" stroke-width="2.65" fill="none" stroke-linejoin="miter" stroke-linecap="square"/>
<path d="M370 238L462 238" stroke="#a8708a" stroke-width="1.15" fill="none" stroke-linejoin="miter" opacity=".8"/>
<path d="M372 238L392 238" stroke="#a01c3c" stroke-width="2.4" fill="none" />
<path d="M417.5 238L417.5 281" stroke="#dfa6d6" stroke-width="2.25" fill="none" stroke-linejoin="miter" stroke-linecap="square"/>
<path d="M417.5 238L417.5 281" stroke="#a8708a" stroke-width="0.75" fill="none" stroke-linejoin="miter" opacity=".8"/>
<path d="M394 310L394 281L461 281" stroke="#dfa6d6" stroke-width="2.45" fill="none" stroke-linejoin="miter" stroke-linecap="square"/>
<path d="M394 310L394 281L461 281" stroke="#a8708a" stroke-width="0.9500000000000002" fill="none" stroke-linejoin="miter" opacity=".8"/>
<path d="M387 213.8L432 213.8" stroke="#9a44a6" stroke-width="3" fill="none" />
<path d="M387 213.8L432 213.8" stroke="#c88ad0" stroke-width="0.6" fill="none" />
<path d="M438 355.5L438 449" stroke="#dcc0d8" stroke-width="2.25" fill="none" stroke-linejoin="miter" stroke-linecap="square"/>
<path d="M438 355.5L438 449" stroke="#a8708a" stroke-width="0.75" fill="none" stroke-linejoin="miter" opacity=".8"/>
<path d="M438 355.5L438 449" stroke="#f8f8f8" stroke-width="0.5" fill="none" opacity=".8"/>
<path d="M438 395.5L484 395.5" stroke="#dcc0d8" stroke-width="2.25" fill="none" stroke-linejoin="miter" stroke-linecap="square"/>
<path d="M438 395.5L484 395.5" stroke="#a8708a" stroke-width="0.75" fill="none" stroke-linejoin="miter" opacity=".8"/>
<path d="M438 395.5L484 395.5" stroke="#f8f8f8" stroke-width="0.5" fill="none" opacity=".8"/>
<path d="M380 355.5L380 441" stroke="#dcc0d8" stroke-width="2.05" fill="none" stroke-linejoin="miter" stroke-linecap="square"/>
<path d="M380 355.5L380 441" stroke="#a8708a" stroke-width="0.7" fill="none" stroke-linejoin="miter" opacity=".8"/>
<path d="M380 355.5L380 441" stroke="#f8f8f8" stroke-width="0.5" fill="none" opacity=".8"/>
<path d="M187.5 204L250 204" stroke="#f0e6ee" stroke-width="0.8" fill="none" />
<path d="M187.5 204L187.5 277" stroke="#f0e6ee" stroke-width="0.8" fill="none" />
<rect x="87.8" y="197" width="3.4" height="8.5" fill="#8e1418" opacity="1"/>
<rect x="87.8" y="256" width="3.4" height="8.5" fill="#8e1418" opacity="1"/>
<rect x="130.8" y="167" width="3.4" height="6.5" fill="#8e1418" opacity="1"/>
<rect x="156.8" y="190" width="3.4" height="6.5" fill="#8e1418" opacity="1"/>
<rect x="98" y="216.3" width="9.5" height="3.0" fill="#8e1418" opacity="1"/>
<rect x="161" y="216.3" width="9.5" height="3.0" fill="#8e1418" opacity="1"/>
<rect x="186.8" y="234" width="3.4" height="8.5" fill="#8e1418" opacity="1"/>
<rect x="175" y="262.3" width="9.5" height="3.0" fill="#8e1418" opacity="1"/>
<rect x="84.8" y="375" width="3.4" height="8.5" fill="#8e1418" opacity="1"/>
<rect x="99" y="303.3" width="8.5" height="3.0" fill="#8e1418" opacity="1"/>
<rect x="161" y="303.3" width="8.5" height="3.0" fill="#8e1418" opacity="1"/>
<rect x="151" y="347.8" width="10.5" height="3.0" fill="#8e1418" opacity="1"/>
<rect x="259.8" y="361" width="3.4" height="9.5" fill="#8e1418" opacity="1"/>
<rect x="325.8" y="358" width="3.4" height="10.5" fill="#8e1418" opacity="1"/>
<rect x="292" y="275.8" width="11.5" height="3.0" fill="#8e1418" opacity="1"/>
<rect x="234" y="384.3" width="10.5" height="3.0" fill="#8e1418" opacity="1"/>
<rect x="255.8" y="414" width="3.4" height="7.5" fill="#8e1418" opacity="1"/>
<rect x="303.8" y="405" width="3.4" height="6.5" fill="#8e1418" opacity="1"/>
<rect x="303.8" y="418" width="3.4" height="6.5" fill="#8e1418" opacity="1"/>
<rect x="346" y="384.3" width="10.5" height="3.0" fill="#8e1418" opacity="1"/>
<rect x="379.8" y="363" width="3.4" height="8.5" fill="#8e1418" opacity="1"/>
<rect x="379.8" y="414" width="3.4" height="8.5" fill="#8e1418" opacity="1"/>
<rect x="436.8" y="365" width="3.4" height="8.5" fill="#8e1418" opacity="1"/>
<rect x="436.8" y="404" width="3.4" height="8.5" fill="#8e1418" opacity="1"/>
<rect x="373" y="352.8" width="11.5" height="3.0" fill="#8e1418" opacity="1"/>
<rect x="365" y="273.3" width="11.5" height="3.0" fill="#8e1418" opacity="1"/>
<rect x="121" y="274.3" width="11.5" height="3.0" fill="#8e1418" opacity="1"/>
<circle cx="36" cy="161" r=".9" fill="#f2d21e"/>
<circle cx="60" cy="159" r=".9" fill="#f2d21e"/>
<circle cx="210" cy="154.5" r=".9" fill="#f2d21e"/>
<circle cx="297" cy="151.5" r=".9" fill="#f2d21e"/>
<circle cx="333" cy="143" r=".9" fill="#f2d21e"/>
<circle cx="369" cy="134" r=".9" fill="#f2d21e"/>
<circle cx="394" cy="178" r=".9" fill="#f2d21e"/>
<circle cx="427" cy="148" r=".9" fill="#f2d21e"/>
<circle cx="459" cy="165" r=".9" fill="#f2d21e"/>
<circle cx="345" cy="190" r=".9" fill="#f2d21e"/>
<circle cx="323" cy="203" r=".9" fill="#f2d21e"/>
<circle cx="281" cy="226" r=".9" fill="#f2d21e"/>
<circle cx="225" cy="240" r=".9" fill="#f2d21e"/>
<circle cx="352" cy="212" r=".9" fill="#f2d21e"/>
<circle cx="407" cy="214" r=".9" fill="#f2d21e"/>
<circle cx="36" cy="293" r=".9" fill="#f2d21e"/>
<circle cx="83" cy="320" r=".9" fill="#f2d21e"/>
<circle cx="36" cy="404" r=".9" fill="#f2d21e"/>
<circle cx="60" cy="407.6" r=".9" fill="#f2d21e"/>
<circle cx="130" cy="415" r=".9" fill="#f2d21e"/>
<circle cx="216" cy="423.7" r=".9" fill="#f2d21e"/>
<circle cx="300" cy="432.5" r=".9" fill="#f2d21e"/>
<circle cx="427" cy="355.5" r=".9" fill="#f2d21e"/>
<circle cx="484" cy="380" r=".9" fill="#f2d21e"/>
<circle cx="484" cy="426" r=".9" fill="#f2d21e"/>
<circle cx="445" cy="449" r=".9" fill="#f2d21e"/>
<circle cx="405" cy="449" r=".9" fill="#f2d21e"/>
<circle cx="327" cy="330" r=".9" fill="#f2d21e"/>
<circle cx="261" cy="340" r=".9" fill="#f2d21e"/>
<circle cx="139" cy="240" r=".9" fill="#f2d21e"/>
<circle cx="188" cy="218" r=".9" fill="#f2d21e"/>
<circle cx="462" cy="250" r=".9" fill="#f2d21e"/>
<circle cx="437" cy="281" r=".9" fill="#f2d21e"/>
<circle cx="394" cy="296" r=".9" fill="#f2d21e"/>
<circle cx="440" cy="296" r=".9" fill="#f2d21e"/>
<rect x="32" y="492" width="8" height="8" fill="#1a1aa8" opacity="1" stroke="#e8e8e8" stroke-width="0.8"/>
<path d="M36 491L36 480" stroke="#1fa01f" stroke-width="1.4" fill="none" />
<path d="M36 476l-2.400 5h4.800z" fill="#1fa01f"/>
<path d="M41 497L52 497" stroke="#d0261c" stroke-width="1.6" fill="none" stroke-dasharray="1.600 .6"/>
<path d="M58 497l-6-2.600v5.200z" fill="#d0261c"/>
<text x="39.500" y="474.500" font-size="7.5" fill="#cfcfcf">Y</text><text x="40" y="494" font-size="7.5" fill="#cfcfcf">Z</text><text x="58.500" y="494.500" font-size="7.500" fill="#cfcfcf">X</text>
</g></g></svg>
<!-- ===== ACROBAT WINDOW ===== -->
<div class="a" id="acro" style="left:544px;top:22px;width:460px;height:521px;background:#fff;box-sizing:border-box;border:1px solid #7796b3;border-top:1.5px solid #6f8fad;box-shadow:0 0 4px 1.5px rgba(120,160,200,.6);"></div>
<svg style="left:550.3px;top:26.5px" width="9" height="10" viewBox="0 0 9 10"><rect x=".6" y=".6" width="7" height="8.4" rx="1" fill="#fff" stroke="#d9534a" stroke-width=".9"/><path d="M2 7 C3.5 5 4 3 3.6 2 C4.5 4.5 6 5.6 6.6 5.6 C5 5.6 3 6.2 2 7Z" fill="none" stroke="#d9534a" stroke-width=".6"/></svg>
<div class="l" style="left:559.8px;top:27.7px;color:#2a2a2a;font-size:6.28px;">Codice di prevenzione incendi-DM 3-8-2015.v6.pdf - Adobe Acrobat Reader DC</div>
<div class="l" style="left:548px;top:40.5px;color:#222;font-size:6.4px;"><u>F</u>ile</div>
<div class="l" style="left:565.5px;top:40.5px;color:#222;font-size:6.4px;"><u>M</u>odifica</div>
<div class="l" style="left:597.5px;top:40.5px;color:#222;font-size:6.4px;"><u>V</u>ista</div>
<div class="l" style="left:618.5px;top:40.5px;color:#222;font-size:6.4px;">Fi<u>n</u>estra</div>
<div class="l" style="left:648.5px;top:40.5px;color:#222;font-size:6.4px;"><u>?</u></div>
<!-- tab bar -->
<div class="a" style="left:545px;top:51px;width:458px;height:18px;background:#e8e8e8;border-top:1px solid #dcdcdc;box-sizing:border-box;"></div>
<div class="a" style="left:645px;top:51px;width:96px;height:18px;background:#fafafa;"></div>
<div class="l" style="left:553px;top:55.5px;color:#4b4b4b;font-size:8.3px;line-height:10px;">Home</div>
<div class="l" style="left:592px;top:55.5px;color:#4b4b4b;font-size:8.3px;line-height:10px;">Strumenti</div>
<div class="l" style="left:659px;top:56px;color:#3c3c3c;font-size:7.05px;line-height:10px;">Codice di prevenzio...</div>
<div class="l" style="left:731.8px;top:55.5px;color:#333;font-size:7px;line-height:10px;font-weight:bold;">×</div>
<!-- toolbar -->
<div class="a" style="left:545px;top:69px;width:458px;height:24.5px;background:#fafafa;border-bottom:1px solid #d5d5d5;box-sizing:border-box;"></div>
<div class="l" style="left:721px;top:78px;color:#555;font-size:6.2px;">21</div>
<div class="a" style="left:716px;top:88px;width:18px;height:1px;background:#c8c8c8;"></div>
<div class="l" style="left:737px;top:78px;color:#555;font-size:6.5px;">/ 277</div>
<div class="a" style="left:763px;top:73px;width:1px;height:17px;background:#dcdcdc;"></div>
<div class="l" style="left:874px;top:78px;color:#555;font-size:5.7px;">100%</div>
<div class="a" style="left:868px;top:89px;width:38px;height:1px;background:#d0d0d0;"></div>
<div class="l" style="left:898px;top:78px;color:#555;font-size:5px;">▾</div>
<!-- left panel & doc area -->
<div class="a" style="left:545px;top:94px;width:23px;height:448px;background:#f8f8f8;"></div>
<div class="a" style="left:568px;top:94px;width:10px;height:439px;background:#dedede;"></div>
<div class="a" style="left:578px;top:94px;width:416px;height:439px;background:#fff;"></div>
<div class="a" style="left:994px;top:94px;width:9px;height:448px;background:#f3f3f3;"></div>
<div class="a" style="left:995.5px;top:134px;width:5px;height:10px;background:#c9c9c9;"></div>
<div class="l" style="left:571.5px;top:313px;color:#555;font-size:5px;">◀</div>
<!-- bottom bar -->
<div class="a" style="left:568px;top:533px;width:426px;height:9px;background:#f4f4f4;"></div>
<div class="a" style="left:577px;top:533px;width:74px;height:9px;background:#e3e3e3;"></div>
<div class="l" style="left:588.5px;top:533.5px;color:#333;font-size:5.84px;">20,988 x 29,700 cm</div>
<div class="a" style="left:688px;top:533px;width:279px;height:8px;background:#cdcdcd;"></div>
<svg style="left:0;top:0" width="1024" height="576" viewBox="0 0 1024 576" fill="none" stroke="#555" stroke-width="1">
<path d="M996.500 100l2-2l2 2M996.500 526l2 2l2-2M656.500 535.200l-2 2l2 2M986 535.200l2 2l-2 2"/>
</svg>
<!-- ===== ACROBAT ICONS ===== -->
<svg style="left:0;top:0" width="1024" height="576" viewBox="0 0 1024 576" fill="none" stroke-linecap="round" stroke-linejoin="round">
 <!-- save (disabled) -->
 <path d="M553.200 77.500h7.400l2.200 2.200v7.300h-9.600z M555.200 77.500v3.200h4.600v-3.200 M555 87v-3.600h6v3.600" stroke="#c4c4c4" stroke-width=".9"/>
 <!-- cloud upload -->
 <path d="M578.700 85.500h-1.200a2.700 2.700 0 0 1-.3-5.400a3.700 3.700 0 0 1 7.200-.6a3 3 0 0 1 .5 6h-1.400" stroke="#505050" stroke-width="1"/>
 <path d="M581.200 88.200v-6.200m-2.300 2.300l2.300-2.400l2.300 2.400" stroke="#505050" stroke-width="1"/>
 <!-- printer -->
 <rect x="600.600" y="76.300" width="7.600" height="3.400" fill="#fff" stroke="#444" stroke-width="1"/>
 <rect x="598.200" y="79.400" width="12.400" height="5.800" rx="1" fill="#444" stroke="#444" stroke-width=".6"/>
 <rect x="600.800" y="83.300" width="7.200" height="4" fill="#fff" stroke="#444" stroke-width=".9"/>
 <path d="M602.400 85.400h4" stroke="#444" stroke-width=".7"/>
 <!-- mail -->
 <rect x="622.300" y="77.300" width="12" height="9" stroke="#555" stroke-width="1"/>
 <path d="M622.500 77.600l5.800 4.600l5.800-4.600M622.500 86l4.300-4M634.100 86l-4.300-4" stroke="#555" stroke-width=".8"/>
 <!-- zoom -->
 <circle cx="650.800" cy="81" r="3.900" stroke="#505050" stroke-width="1.100"/><path d="M653.800 84l3.800 3.800" stroke="#505050" stroke-width="1.400"/><path d="M649 81h3.600" stroke="#505050" stroke-width=".8"/>
 <!-- page up / down -->
 <circle cx="675.200" cy="82" r="5.300" stroke="#505050" stroke-width="1"/><path d="M675.200 85v-5.600m-2.200 2.200l2.200-2.300l2.200 2.300" stroke="#505050" stroke-width="1"/>
 <circle cx="698.200" cy="82" r="5.300" stroke="#505050" stroke-width="1"/><path d="M698.200 79v5.600m-2.200-2.200l2.200 2.300l2.200-2.300" stroke="#505050" stroke-width="1"/>
 <!-- select cursor -->
 <path d="M777.800 76.400v9.600l2.300-2.100l1.700 3.600l1.600-.7l-1.700-3.500l3-.2z" fill="#2e6da8" stroke="#2e6da8" stroke-width=".4"/>
 <!-- hand -->
 <path d="M801.600 83.200l-1.700-1.700c-.9-.8-1.900.2-1.200 1.100l3 4.100c.7.900 1.600 1.300 2.700 1.300h2.300c1.900 0 3.100-1.300 3.100-3.200v-4.500c0-1.100-1.500-1.100-1.500 0v1.300v-3c0-1.100-1.600-1.100-1.600 0v2.400v-3.400c0-1.100-1.600-1.100-1.600 0v3.400v-2.700c0-1.100-1.600-1.100-1.600 0z" stroke="#505050" stroke-width=".9"/>
 <!-- zoom out / in -->
 <circle cx="827.600" cy="81.800" r="5.200" stroke="#505050" stroke-width="1"/><path d="M825 81.800h5.200" stroke="#505050" stroke-width="1"/>
 <circle cx="851" cy="81.800" r="5.200" stroke="#505050" stroke-width="1"/><path d="M848.400 81.800h5.200M851 79.200v5.200" stroke="#505050" stroke-width="1"/>
 <!-- more -->
 <circle cx="919.800" cy="82" r=".95" fill="#444"/><circle cx="923.600" cy="82" r=".95" fill="#444"/><circle cx="927.400" cy="82" r=".95" fill="#444"/>
 <!-- help + bell -->
 <circle cx="953.500" cy="59.800" r="5" stroke="#555" stroke-width="1"/>
 <path d="M958.200 59.800" />
 <path d="M971.600 62.200c1-.9 1.300-2.200 1.300-4c0-1.800 1-3 2.500-3s2.500 1.200 2.500 3c0 1.800.3 3.100 1.300 4z" fill="#a9a9a9" stroke="#a9a9a9" stroke-width=".6"/><circle cx="975.400" cy="63.400" r=".9" fill="#a9a9a9"/>
 <!-- side panel icons -->
 <path d="M555.400 108.600v-1.600h4.400l2.300 2.300v7h-2.200" stroke="#4a4a4a" stroke-width="1"/><path d="M552.600 109.200h4.600l2.200 2.200v6.800h-6.800z" stroke="#4a4a4a" stroke-width="1" fill="#f8f8f8"/>
 <path d="M553 132.600h6.600v10.200l-3.300-2.800l-3.300 2.800z" stroke="#4a4a4a" stroke-width="1.100"/>
 <path d="M559.700 159l-4.600 4.400c-1.100 1.100.4 2.600 1.500 1.500l4.200-4c1.900-1.900-.7-4.400-2.600-2.600l-5 4.700c-2.600 2.600 1.100 6.100 3.600 3.600l3.600-3.400" stroke="#4a4a4a" stroke-width="1"/>
</svg>
<div class="l" style="left:951.800px;top:56.400px;color:#555;font-size:6.500px;font-weight:bold;">?</div>
<!-- ===== PDF PAGE CONTENT ===== -->
<svg style="left:0;top:0" width="1024" height="576" viewBox="0 0 1024 576" font-family="Liberation Sans, sans-serif">
<defs><pattern id="dots" width="2" height="2" patternUnits="userSpaceOnUse"><rect x="0" y="0" width="1" height="1" fill="#d2d2d2"/></pattern><clipPath id="pg"><rect x="578" y="94.5" width="416" height="438.5"/></clipPath></defs>
<g clip-path="url(#pg)">
<rect x="715" y="90" width="70" height="88" fill="#e3e3e3"/>
<rect x="715" y="90" width="70" height="88" fill="url(#dots)"/>
<path d="M715.4 90L715.4 178" stroke="#111" stroke-width="1" fill="none"/>
<path d="M784.6 90L784.6 178" stroke="#111" stroke-width="1" fill="none"/>
<path d="M715 109L785 109" stroke="#111" stroke-width="1.2" fill="none"/>
<path d="M715 132.3L785 132.3" stroke="#111" stroke-width="1.2" fill="none"/>
<path d="M715 155.2L785 155.2" stroke="#111" stroke-width="1.2" fill="none"/>
<path d="M715 178L785 178" stroke="#111" stroke-width="1.2" fill="none"/>
<rect x="718" y="111.5" width="65" height="64.5" fill="none" stroke="#333" stroke-width=".6" stroke-dasharray="1 1"/>
<path d="M718 94L718 108" stroke="#333" stroke-width="0.6" stroke-dasharray="1 1" fill="none"/>
<path d="M783 94L783 108" stroke="#333" stroke-width="0.6" stroke-dasharray="1 1" fill="none"/>
<path d="M732 94V167H723" stroke="#1e7d1e" stroke-width="2" fill="none"/>
<path d="M719 167l6-3.2v6.4z" fill="#1e7d1e"/>
<text x="781.5" y="105.6" font-size="5.3" text-anchor="end" fill="#262626" >Piano +3</text>
<text x="781.5" y="130.3" font-size="5.3" text-anchor="end" fill="#262626" >Piano +2</text>
<text x="781.5" y="153.4" font-size="5.3" text-anchor="end" fill="#262626" >Piano +1</text>
<text x="781.5" y="175.6" font-size="5.3" text-anchor="end" fill="#262626" >Piano +0</text>
<text x="720" y="175.6" font-size="5.3" text-anchor="start" fill="#262626" >Compartim. 2</text>
<path d="M664.3 94L664.3 177" stroke="#222" stroke-width="0.7" fill="none"/>
<path d="M664.3 177.6l-1.5 -4.2h3z" fill="#111"/>
<path d="M671 132.3L671 177" stroke="#222" stroke-width="0.7" fill="none"/>
<path d="M671 132.3l-1.5 4.2h3z" fill="#111"/>
<path d="M671 177.6l-1.5 -4.2h3z" fill="#111"/>
<path d="M667 132.3L715 132.3" stroke="#555" stroke-width="0.6" fill="none"/>
<path d="M666 178L803 178" stroke="#111" stroke-width="1" fill="none"/>
<text x="660.5" y="131" font-size="5.6" text-anchor="end" fill="#262626" >Quota del</text>
<text x="660.5" y="137.6" font-size="5.6" text-anchor="end" fill="#262626" >compartimento 2</text>
<text x="660.5" y="176.6" font-size="5.6" text-anchor="end" fill="#262626" >Piano di riferimento</text>
<text x="660.5" y="183.4" font-size="5.6" text-anchor="end" fill="#262626" >compartimenti 1 e 2</text>
<g transform="translate(678 151.6)"><path d="M2.5 4.5l-2-2.5M5 3.2l-.8-2.6M8 2.8V.4M19.5 4.5l2-2.5M17 3.2l.8-2.6M14 2.8V.4" stroke="#444" stroke-width=".55" fill="none"/><rect x="5.5" y="3.6" width="11" height="2.6" fill="#222"/><rect x="2.2" y="6" width="17.6" height="16.6" rx="1" fill="#161616"/><rect x="3.8" y="8" width="6.6" height="5.2" fill="#fff"/><rect x="11.6" y="8" width="6.6" height="5.2" fill="#fff"/><rect x="0.6" y="8.5" width="1.4" height="4.5" fill="#333"/><rect x="20" y="8.5" width="1.4" height="4.5" fill="#333"/><rect x="4.2" y="17.2" width="13.6" height="2.2" fill="#999"/><rect x="3.2" y="22.4" width="3.4" height="3.4" fill="#111"/><rect x="15.4" y="22.4" width="3.4" height="3.4" fill="#111"/><rect x="2" y="20.4" width="18" height="1.2" fill="#ddd"/></g>
<g transform="translate(704.5 162)" stroke="#111" fill="none" stroke-linecap="round" stroke-linejoin="round"><circle cx="10.200" cy="1.700" r="1.500" fill="#111" stroke="none"/><path d="M9.400 3.400L6.800 8.600L4 13.400" stroke-width="2.300"/><path d="M9.600 3.100L3.200 2.700L1.200 4.400" stroke-width="2"/><path d="M9.600 4L11.600 6.200" stroke-width="1.300"/><path d="M7 8L9.800 9.800L13.400 10" stroke-width="1.900"/></g>
<path d="M791.5 109L791.5 177" stroke="#222" stroke-width="0.6" fill="none"/>
<path d="M791.5 177.6l-1.5 -4.2h3z" fill="#111"/>
<path d="M795.6 94L795.6 177" stroke="#222" stroke-width="0.6" fill="none"/>
<path d="M795.6 177.6l-1.5 -4.2h3z" fill="#111"/>
<path d="M799.8 94L799.8 177" stroke="#222" stroke-width="0.6" fill="none"/>
<path d="M799.8 177.6l-1.5 -4.2h3z" fill="#111"/>
<path d="M791.5 109l-1.5 4.2h3z" fill="#111"/>
<path d="M785 109L797 109" stroke="#777" stroke-width="0.5" fill="none"/>
<text x="805" y="106.5" font-size="5.6" text-anchor="start" fill="#262626" >Quota del</text>
<text x="805" y="113" font-size="5.6" text-anchor="start" fill="#262626" >piano +3</text>
<rect x="822" y="184" width="69.5" height="115.69999999999999" fill="#e3e3e3"/>
<rect x="822" y="184" width="69.5" height="115.69999999999999" fill="url(#dots)"/>
<path d="M822.4 184L822.4 299.7" stroke="#111" stroke-width="1" fill="none"/>
<path d="M891.1 184L891.1 299.7" stroke="#111" stroke-width="1" fill="none"/>
<path d="M821.5 184L892.0 184" stroke="#111" stroke-width="1.2" fill="none"/>
<path d="M822 207.2L891.5 207.2" stroke="#111" stroke-width="1.2" fill="none"/>
<path d="M822 230.3L891.5 230.3" stroke="#111" stroke-width="1.2" fill="none"/>
<path d="M822 253L891.5 253" stroke="#111" stroke-width="1.2" fill="none"/>
<path d="M822 276.4L891.5 276.4" stroke="#111" stroke-width="1.2" fill="none"/>
<path d="M822 299.7L891.5 299.7" stroke="#111" stroke-width="1.2" fill="none"/>
<rect x="824.5" y="186.5" width="65.0" height="64.80000000000001" fill="none" stroke="#333" stroke-width=".6" stroke-dasharray="1 1"/>
<rect x="824.5" y="255.2" width="65.0" height="42.80000000000001" fill="none" stroke="#333" stroke-width=".6" stroke-dasharray="1 1"/>
<path d="M849 197.8H840.6V286.5H849M840.6 241.5H831" stroke="#1e7d1e" stroke-width="2" fill="none"/>
<path d="M826.5 241.5l6-3.2v6.4z" fill="#1e7d1e"/>
<text x="887.5" y="206.2" font-size="5.3" text-anchor="end" fill="#262626" >Piano +3</text>
<text x="887.5" y="229.5" font-size="5.3" text-anchor="end" fill="#262626" >Piano +2</text>
<text x="887.5" y="249.8" font-size="5.3" text-anchor="end" fill="#262626" >Piano +1</text>
<text x="887.5" y="274.8" font-size="5.3" text-anchor="end" fill="#262626" >Piano +0</text>
<text x="887.5" y="296.6" font-size="5.3" text-anchor="end" fill="#262626" >Piano -1</text>
<text x="826.5" y="192.5" font-size="5.3" text-anchor="start" fill="#262626" >Compartim. 1</text>
<text x="826.5" y="296.8" font-size="5.3" text-anchor="start" fill="#262626" >Compartim. 2</text>
<g transform="translate(809 232.5)" stroke="#111" fill="none" stroke-linecap="round" stroke-linejoin="round"><circle cx="10.200" cy="1.700" r="1.500" fill="#111" stroke="none"/><path d="M9.400 3.400L6.800 8.600L4 13.400" stroke-width="2.300"/><path d="M9.600 3.100L3.200 2.700L1.200 4.400" stroke-width="2"/><path d="M9.600 4L11.600 6.200" stroke-width="1.300"/><path d="M7 8L9.800 9.800L13.400 10" stroke-width="1.900"/></g>
<path d="M803.4 248.8L822 248.8" stroke="#111" stroke-width="1.3" fill="none"/>
<path d="M800 207.2L800 276.4" stroke="#222" stroke-width="0.7" fill="none"/>
<path d="M800 207.2l-1.5 4.2h3z" fill="#111"/>
<path d="M800 276.4l-1.5 -4.2h3z" fill="#111"/>
<path d="M795 207.2L822 207.2" stroke="#444" stroke-width="0.6" fill="none"/>
<path d="M795 276.4L984 276.4" stroke="#555" stroke-width="0.6" stroke-dasharray="1 1" fill="none"/>
<text x="793.5" y="199.5" font-size="5.6" text-anchor="end" fill="#262626" >Quota del</text>
<text x="793.5" y="206.2" font-size="5.6" text-anchor="end" fill="#262626" >compartimento 1</text>
<text x="793.5" y="212.9" font-size="5.6" text-anchor="end" fill="#262626" >e altezza</text>
<text x="793.5" y="219.6" font-size="5.6" text-anchor="end" fill="#262626" >antincendio</text>
<g transform="translate(895.5 250.2)"><path d="M2.5 4.5l-2-2.5M5 3.2l-.8-2.6M8 2.8V.4M19.5 4.5l2-2.5M17 3.2l.8-2.6M14 2.8V.4" stroke="#444" stroke-width=".55" fill="none"/><rect x="5.5" y="3.6" width="11" height="2.6" fill="#222"/><rect x="2.2" y="6" width="17.6" height="16.6" rx="1" fill="#161616"/><rect x="3.8" y="8" width="6.6" height="5.2" fill="#fff"/><rect x="11.6" y="8" width="6.6" height="5.2" fill="#fff"/><rect x="0.6" y="8.5" width="1.4" height="4.5" fill="#333"/><rect x="20" y="8.5" width="1.4" height="4.5" fill="#333"/><rect x="4.2" y="17.2" width="13.6" height="2.2" fill="#999"/><rect x="3.2" y="22.4" width="3.4" height="3.4" fill="#111"/><rect x="15.4" y="22.4" width="3.4" height="3.4" fill="#111"/><rect x="2" y="20.4" width="18" height="1.2" fill="#ddd"/></g>
<path d="M891.5 276.4L921 276.4" stroke="#111" stroke-width="1.2" fill="none"/>
<path d="M925.7 230.3L925.7 299.5" stroke="#222" stroke-width="0.7" fill="none"/>
<path d="M925.7 230.3l-1.5 4.2h3z" fill="#111"/>
<path d="M925.7 276.2l-1.5 -4.2h3z" fill="#111"/>
<path d="M925.7 276.6l-1.5 4.2h3z" fill="#111"/>
<path d="M925.7 299.6l-1.5 -4.2h3z" fill="#111"/>
<path d="M891.5 230.3L929 230.3" stroke="#555" stroke-width="0.6" fill="none"/>
<path d="M891.5 299.7L929 299.7" stroke="#555" stroke-width="0.6" fill="none"/>
<text x="932" y="229" font-size="5.6" text-anchor="start" fill="#262626" >Quota del</text>
<text x="932" y="235.6" font-size="5.6" text-anchor="start" fill="#262626" >piano +2</text>
<text x="932" y="271.5" font-size="5.6" text-anchor="start" fill="#262626" >Piano di riferimento</text>
<text x="932" y="278.2" font-size="5.6" text-anchor="start" fill="#262626" >compartimenti 1 e 2</text>
<text x="932" y="298.5" font-size="5.6" text-anchor="start" fill="#262626" >Quota del</text>
<text x="932" y="305.2" font-size="5.6" text-anchor="start" fill="#262626" >compartimento 2</text>
<rect x="715" y="250.4" width="70" height="67.6" fill="#e3e3e3"/>
<rect x="715" y="250.4" width="70" height="67.6" fill="url(#dots)"/>
<path d="M715.4 250.4L715.4 318.0" stroke="#111" stroke-width="1" fill="none"/>
<path d="M784.6 250.4L784.6 318.0" stroke="#111" stroke-width="1" fill="none"/>
<path d="M714.5 250.4L785.5 250.4" stroke="#111" stroke-width="1.2" fill="none"/>
<path d="M715 273.5L785 273.5" stroke="#111" stroke-width="1.2" fill="none"/>
<path d="M715 296.6L785 296.6" stroke="#111" stroke-width="1.2" fill="none"/>
<path d="M715 318.0L785 318.0" stroke="#111" stroke-width="1.2" fill="none"/>
<rect x="715" y="320.4" width="70" height="45.200000000000045" fill="#e3e3e3"/>
<rect x="715" y="320.4" width="70" height="45.200000000000045" fill="url(#dots)"/>
<path d="M715.4 320.4L715.4 365.6" stroke="#111" stroke-width="1" fill="none"/>
<path d="M784.6 320.4L784.6 365.6" stroke="#111" stroke-width="1" fill="none"/>
<path d="M714.5 320.4L785.5 320.4" stroke="#111" stroke-width="1.2" fill="none"/>
<path d="M715 343.0L785 343.0" stroke="#111" stroke-width="1.2" fill="none"/>
<path d="M715 365.6L785 365.6" stroke="#111" stroke-width="1.2" fill="none"/>
<rect x="717.5" y="252.9" width="65.5" height="62.99999999999997" fill="none" stroke="#333" stroke-width=".6" stroke-dasharray="1 1"/>
<rect x="717.5" y="322.9" width="65.5" height="41.30000000000001" fill="none" stroke="#333" stroke-width=".6" stroke-dasharray="1 1"/>
<path d="M741.2 264.0H732.8V308.2H725" stroke="#1e7d1e" stroke-width="2" fill="none"/>
<path d="M720 308.2l6-3.2v6.4z" fill="#1e7d1e"/>
<path d="M741.2 352.0H732.8V332.0H772.5" stroke="#1e7d1e" stroke-width="2" fill="none"/>
<path d="M777.8 332.0l-6-3.2v6.4z" fill="#1e7d1e"/>
<text x="781.5" y="272.8" font-size="5.3" text-anchor="end" fill="#262626" >Piano +3</text>
<text x="781.5" y="295.8" font-size="5.3" text-anchor="end" fill="#262626" >Piano +2</text>
<text x="781.5" y="316.2" font-size="5.3" text-anchor="end" fill="#262626" >Piano +1</text>
<text x="781.5" y="341.4" font-size="5.3" text-anchor="end" fill="#262626" >Piano +0</text>
<text x="781.5" y="362.4" font-size="5.3" text-anchor="end" fill="#262626" >Piano -1</text>
<text x="719" y="258.8" font-size="5.3" text-anchor="start" fill="#262626" >Compartim. 1</text>
<text x="719" y="362.4" font-size="5.3" text-anchor="start" fill="#262626" >Compartim. 2</text>
<g transform="translate(702.5 298.8)" stroke="#111" fill="none" stroke-linecap="round" stroke-linejoin="round"><circle cx="10.200" cy="1.700" r="1.500" fill="#111" stroke="none"/><path d="M9.400 3.400L6.800 8.600L4 13.400" stroke-width="2.300"/><path d="M9.600 3.100L3.200 2.700L1.200 4.400" stroke-width="2"/><path d="M9.600 4L11.600 6.200" stroke-width="1.300"/><path d="M7 8L9.800 9.800L13.400 10" stroke-width="1.900"/></g>
<g transform="translate(795.5 326.4) scale(-1 1)" stroke="#111" fill="none" stroke-linecap="round" stroke-linejoin="round"><circle cx="10.200" cy="1.700" r="1.500" fill="#111" stroke="none"/><path d="M9.400 3.400L6.800 8.600L4 13.400" stroke-width="2.300"/><path d="M9.600 3.100L3.200 2.700L1.200 4.400" stroke-width="2"/><path d="M9.600 4L11.600 6.200" stroke-width="1.300"/><path d="M7 8L9.800 9.800L13.400 10" stroke-width="1.900"/></g>
<g transform="translate(800 316.8)"><path d="M2.5 4.5l-2-2.5M5 3.2l-.8-2.6M8 2.8V.4M19.5 4.5l2-2.5M17 3.2l.8-2.6M14 2.8V.4" stroke="#444" stroke-width=".55" fill="none"/><rect x="5.5" y="3.6" width="11" height="2.6" fill="#222"/><rect x="2.2" y="6" width="17.6" height="16.6" rx="1" fill="#161616"/><rect x="3.8" y="8" width="6.6" height="5.2" fill="#fff"/><rect x="11.6" y="8" width="6.6" height="5.2" fill="#fff"/><rect x="0.6" y="8.5" width="1.4" height="4.5" fill="#333"/><rect x="20" y="8.5" width="1.4" height="4.5" fill="#333"/><rect x="4.2" y="17.2" width="13.6" height="2.2" fill="#999"/><rect x="3.2" y="22.4" width="3.4" height="3.4" fill="#111"/><rect x="15.4" y="22.4" width="3.4" height="3.4" fill="#111"/><rect x="2" y="20.4" width="18" height="1.2" fill="#ddd"/></g>
<path d="M785 343.0L828 343.0" stroke="#111" stroke-width="1.2" fill="none"/>
<path d="M828 343.0L838 343.0" stroke="#555" stroke-width="0.6" stroke-dasharray="1 1" fill="none"/>
<path d="M785 365.6L838 365.6" stroke="#555" stroke-width="0.6" fill="none"/>
<path d="M673.4 315.2L715 315.2" stroke="#111" stroke-width="1.3" fill="none"/>
<g transform="translate(677 289)"><path d="M2.5 4.5l-2-2.5M5 3.2l-.8-2.6M8 2.8V.4M19.5 4.5l2-2.5M17 3.2l.8-2.6M14 2.8V.4" stroke="#444" stroke-width=".55" fill="none"/><rect x="5.5" y="3.6" width="11" height="2.6" fill="#222"/><rect x="2.2" y="6" width="17.6" height="16.6" rx="1" fill="#161616"/><rect x="3.8" y="8" width="6.6" height="5.2" fill="#fff"/><rect x="11.6" y="8" width="6.6" height="5.2" fill="#fff"/><rect x="0.6" y="8.5" width="1.4" height="4.5" fill="#333"/><rect x="20" y="8.5" width="1.4" height="4.5" fill="#333"/><rect x="4.2" y="17.2" width="13.6" height="2.2" fill="#999"/><rect x="3.2" y="22.4" width="3.4" height="3.4" fill="#111"/><rect x="15.4" y="22.4" width="3.4" height="3.4" fill="#111"/><rect x="2" y="20.4" width="18" height="1.2" fill="#ddd"/></g>
<path d="M664.6 273.5L664.6 315" stroke="#222" stroke-width="0.7" fill="none"/>
<path d="M664.6 273.5l-1.5 4.2h3z" fill="#111"/>
<path d="M664.6 315.2l-1.5 -4.2h3z" fill="#111"/>
<path d="M670.6 296.5L670.6 315" stroke="#222" stroke-width="0.7" fill="none"/>
<path d="M670.6 296.5l-1.5 4.2h3z" fill="#111"/>
<path d="M670.6 315.2l-1.5 -4.2h3z" fill="#111"/>
<path d="M660 273.5L715 273.5" stroke="#555" stroke-width="0.6" fill="none"/>
<path d="M667 296.5L715 296.5" stroke="#666" stroke-width="0.6" stroke-dasharray="1 1" fill="none"/>
<path d="M660 315.2L673 315.2" stroke="#666" stroke-width="0.6" stroke-dasharray="1 1" fill="none"/>
<text x="656.5" y="269.3" font-size="5.6" text-anchor="end" fill="#262626" >Quota del</text>
<text x="656.5" y="276" font-size="5.6" text-anchor="end" fill="#262626" >compartimento 1</text>
<text x="656.5" y="282.7" font-size="5.6" text-anchor="end" fill="#262626" >e altezza antincendio</text>
<text x="656.5" y="294.6" font-size="5.6" text-anchor="end" fill="#262626" >Quota del</text>
<text x="656.5" y="301.3" font-size="5.6" text-anchor="end" fill="#262626" >piano +2</text>
<text x="656.5" y="312.4" font-size="5.6" text-anchor="end" fill="#262626" >Piano di riferimento</text>
<text x="656.5" y="319.1" font-size="5.6" text-anchor="end" fill="#262626" >compartimento 1</text>
<path d="M835 343L835 365.4" stroke="#222" stroke-width="0.7" fill="none"/>
<path d="M835 343.2l-1.5 4.2h3z" fill="#111"/>
<path d="M835 365.6l-1.5 -4.2h3z" fill="#111"/>
<text x="843.7" y="338.2" font-size="5.6" text-anchor="start" fill="#262626" >Piano di riferimento</text>
<text x="843.7" y="344.9" font-size="5.6" text-anchor="start" fill="#262626" >compartimento 2</text>
<text x="843.7" y="364.5" font-size="5.6" text-anchor="start" fill="#262626" >Quota del</text>
<text x="843.7" y="371.2" font-size="5.6" text-anchor="start" fill="#262626" >compartimento 2</text>
<rect x="715" y="383.8" width="70" height="67.59999999999997" fill="#e3e3e3"/>
<rect x="715" y="383.8" width="70" height="67.59999999999997" fill="url(#dots)"/>
<path d="M715.4 383.8L715.4 451.4" stroke="#111" stroke-width="1" fill="none"/>
<path d="M784.6 383.8L784.6 451.4" stroke="#111" stroke-width="1" fill="none"/>
<path d="M714.5 383.8L785.5 383.8" stroke="#111" stroke-width="1.2" fill="none"/>
<path d="M715 406.90000000000003L785 406.90000000000003" stroke="#111" stroke-width="1.2" fill="none"/>
<path d="M715 430.0L785 430.0" stroke="#111" stroke-width="1.2" fill="none"/>
<path d="M715 451.4L785 451.4" stroke="#111" stroke-width="1.2" fill="none"/>
<rect x="715" y="453.8" width="70" height="45.19999999999999" fill="#e3e3e3"/>
<rect x="715" y="453.8" width="70" height="45.19999999999999" fill="url(#dots)"/>
<path d="M715.4 453.8L715.4 499.0" stroke="#111" stroke-width="1" fill="none"/>
<path d="M784.6 453.8L784.6 499.0" stroke="#111" stroke-width="1" fill="none"/>
<path d="M714.5 453.8L785.5 453.8" stroke="#111" stroke-width="1.2" fill="none"/>
<path d="M715 476.4L785 476.4" stroke="#111" stroke-width="1.2" fill="none"/>
<path d="M715 499.0L785 499.0" stroke="#111" stroke-width="1.2" fill="none"/>
<rect x="717.5" y="386.3" width="65.5" height="63.0" fill="none" stroke="#333" stroke-width=".6" stroke-dasharray="1 1"/>
<rect x="717.5" y="456.3" width="65.5" height="41.30000000000001" fill="none" stroke="#333" stroke-width=".6" stroke-dasharray="1 1"/>
<path d="M741.2 397.40000000000003H732.8V441.6H725" stroke="#1e7d1e" stroke-width="2" fill="none"/>
<path d="M720 441.6l6-3.2v6.4z" fill="#1e7d1e"/>
<path d="M741.2 485.4H732.8V465.4H772.5" stroke="#1e7d1e" stroke-width="2" fill="none"/>
<path d="M777.8 465.4l-6-3.2v6.4z" fill="#1e7d1e"/>
<text x="781.5" y="406.2" font-size="5.3" text-anchor="end" fill="#262626" >Piano +3</text>
<text x="781.5" y="429.2" font-size="5.3" text-anchor="end" fill="#262626" >Piano +2</text>
<text x="781.5" y="449.6" font-size="5.3" text-anchor="end" fill="#262626" >Piano +1</text>
<text x="781.5" y="474.8" font-size="5.3" text-anchor="end" fill="#262626" >Piano +0</text>
<text x="781.5" y="495.8" font-size="5.3" text-anchor="end" fill="#262626" >Piano -1</text>
<text x="719" y="392.2" font-size="5.3" text-anchor="start" fill="#262626" >Compartim. 1</text>
<text x="719" y="495.8" font-size="5.3" text-anchor="start" fill="#262626" >Compartim. 2</text>
<g transform="translate(702.5 432.2)" stroke="#111" fill="none" stroke-linecap="round" stroke-linejoin="round"><circle cx="10.200" cy="1.700" r="1.500" fill="#111" stroke="none"/><path d="M9.400 3.400L6.800 8.600L4 13.400" stroke-width="2.300"/><path d="M9.600 3.100L3.200 2.700L1.200 4.400" stroke-width="2"/><path d="M9.600 4L11.600 6.200" stroke-width="1.300"/><path d="M7 8L9.800 9.800L13.400 10" stroke-width="1.900"/></g>
<g transform="translate(795.5 459.8) scale(-1 1)" stroke="#111" fill="none" stroke-linecap="round" stroke-linejoin="round"><circle cx="10.200" cy="1.700" r="1.500" fill="#111" stroke="none"/><path d="M9.400 3.400L6.800 8.600L4 13.400" stroke-width="2.300"/><path d="M9.600 3.100L3.200 2.700L1.200 4.400" stroke-width="2"/><path d="M9.600 4L11.600 6.200" stroke-width="1.300"/><path d="M7 8L9.800 9.800L13.400 10" stroke-width="1.900"/></g>
<g transform="translate(800 450.20000000000005)"><path d="M2.5 4.5l-2-2.5M5 3.2l-.8-2.6M8 2.8V.4M19.5 4.5l2-2.5M17 3.2l.8-2.6M14 2.8V.4" stroke="#444" stroke-width=".55" fill="none"/><rect x="5.5" y="3.6" width="11" height="2.6" fill="#222"/><rect x="2.2" y="6" width="17.6" height="16.6" rx="1" fill="#161616"/><rect x="3.8" y="8" width="6.6" height="5.2" fill="#fff"/><rect x="11.6" y="8" width="6.6" height="5.2" fill="#fff"/><rect x="0.6" y="8.5" width="1.4" height="4.5" fill="#333"/><rect x="20" y="8.5" width="1.4" height="4.5" fill="#333"/><rect x="4.2" y="17.2" width="13.6" height="2.2" fill="#999"/><rect x="3.2" y="22.4" width="3.4" height="3.4" fill="#111"/><rect x="15.4" y="22.4" width="3.4" height="3.4" fill="#111"/><rect x="2" y="20.4" width="18" height="1.2" fill="#ddd"/></g>
<path d="M785 476.4L828 476.4" stroke="#111" stroke-width="1.2" fill="none"/>
<path d="M828 476.4L838 476.4" stroke="#555" stroke-width="0.6" stroke-dasharray="1 1" fill="none"/>
<path d="M785 499.0L838 499.0" stroke="#555" stroke-width="0.6" fill="none"/>
<path d="M696 448.4L715 448.4" stroke="#111" stroke-width="1.3" fill="none"/>
<path d="M693.2 407L693.2 476" stroke="#222" stroke-width="0.7" fill="none"/>
<path d="M693.2 407l-1.5 4.2h3z" fill="#111"/>
<path d="M693.2 476.2l-1.5 -4.2h3z" fill="#111"/>
<path d="M688.7 407L715 407" stroke="#555" stroke-width="0.6" fill="none"/>
<path d="M688.7 476.3L715 476.3" stroke="#666" stroke-width="0.6" stroke-dasharray="1 1" fill="none"/>
<text x="687" y="402.7" font-size="5.6" text-anchor="end" fill="#262626" >Quota del</text>
<text x="687" y="409.4" font-size="5.6" text-anchor="end" fill="#262626" >compartimento 1</text>
<text x="687" y="416.1" font-size="5.6" text-anchor="end" fill="#262626" >e altezza antincendio</text>
<path d="M785 430L838 430" stroke="#555" stroke-width="0.6" fill="none"/>
<path d="M835 430L835 499.2" stroke="#222" stroke-width="0.7" fill="none"/>
<path d="M835 430l-1.5 4.2h3z" fill="#111"/>
<path d="M835 476l-1.5 -4.2h3z" fill="#111"/>
<path d="M835 476.6l-1.5 4.2h3z" fill="#111"/>
<path d="M835 499.4l-1.5 -4.2h3z" fill="#111"/>
<text x="843.2" y="427.7" font-size="5.6" text-anchor="start" fill="#262626" >Quota del</text>
<text x="843.2" y="434.4" font-size="5.6" text-anchor="start" fill="#262626" >piano +2</text>
<text x="843.2" y="471" font-size="5.6" text-anchor="start" fill="#262626" >Piano di riferimento</text>
<text x="843.2" y="477.7" font-size="5.6" text-anchor="start" fill="#262626" >compartimenti 1 e 2</text>
<text x="843.2" y="497.8" font-size="5.6" text-anchor="start" fill="#262626" >Quota del</text>
<text x="843.2" y="504.5" font-size="5.6" text-anchor="start" fill="#262626" >compartimento 2</text>
<rect x="715" y="517.6" width="70" height="42.39999999999998" fill="#e3e3e3"/>
<rect x="715" y="517.6" width="70" height="42.39999999999998" fill="url(#dots)"/>
<path d="M715.4 517.6L715.4 560" stroke="#111" stroke-width="1" fill="none"/>
<path d="M784.6 517.6L784.6 560" stroke="#111" stroke-width="1" fill="none"/>
<path d="M714.5 517.6L785.5 517.6" stroke="#111" stroke-width="1.2" fill="none"/>
<rect x="717.5" y="520" width="65.5" height="40" fill="none" stroke="#333" stroke-width=".6" stroke-dasharray="1 1"/>
<text x="719" y="525.8" font-size="5.3" text-anchor="start" fill="#262626" >Compartim. 1</text>
<path d="M733 529.6H741.5" stroke="#1e7d1e" stroke-width="2"/>
</g>
<circle cx="938.3" cy="149.4" r="46" fill="#d81f36"/>
<circle cx="938.3" cy="149.4" r="45" fill="none" stroke="#f4a6ae" stroke-width=".6"/>
<circle cx="938.3" cy="149.4" r="33.5" fill="#fff"/>
<path id="arcT" d="M902.0999999999999 149.4A36.2 36.2 0 0 1 974.5 149.4" fill="none"/>
<path id="arcB" d="M895.0999999999999 149.4A43.2 43.2 0 0 0 981.5 149.4" fill="none"/>
<text font-size="9.7" font-weight="bold" fill="#fff" stroke="#fff" stroke-width=".25" text-anchor="middle" letter-spacing=".95"><textPath href="#arcT" startOffset="50%">VIGILI DEL FUOCO</textPath></text>
<text font-size="9.7" font-weight="bold" fill="#fff" stroke="#fff" stroke-width=".25" text-anchor="middle" letter-spacing="1.5"><textPath href="#arcB" startOffset="50%">CORPO NAZIONALE</textPath></text>
<g transform="translate(938.3 149.4)"><path d="M-14 24L11 7M14 24L-11 7" stroke="#d98a2b" stroke-width="2.2" stroke-linecap="round"/><path d="M-15.5 6.5l5-2.5l3.4 5.4l-5 2.3z" fill="#e0952f"/><path d="M15.5 6.5l-5-2.5l-3.4 5.4l5 2.3z" fill="#e0952f"/><path d="M0 -27C1.5 -20 9 -14 9 -4C9 3 4.5 6 0 6C-4.500 6 -9 3 -9 -4C-9 -12 -2.500 -17 0 -27Z" fill="#f2a62e"/><path d="M0.500 -17C2 -12 6 -9 6 -3C6 1.500 3 4 0 4C-3 4 -6 1.500 -6 -3C-6 -7 -1 -11 0.500 -17Z" fill="#f7c948"/><path d="M0 -7C1 -4 3 -3 3 -0.500C3 1.500 1.500 3 0 3C-1.500 3 -3 1.500 -3 -0.500C-3 -3 -0.500 -4 0 -7Z" fill="#e6702a"/><circle cx="0" cy="13" r="6.4" fill="#e8962e"/><circle cx="0" cy="13" r="4.2" fill="#d8262c"/><rect x="-3" y="5" width="6" height="3" fill="#e0952f"/></g>
</svg>
</body></html>
